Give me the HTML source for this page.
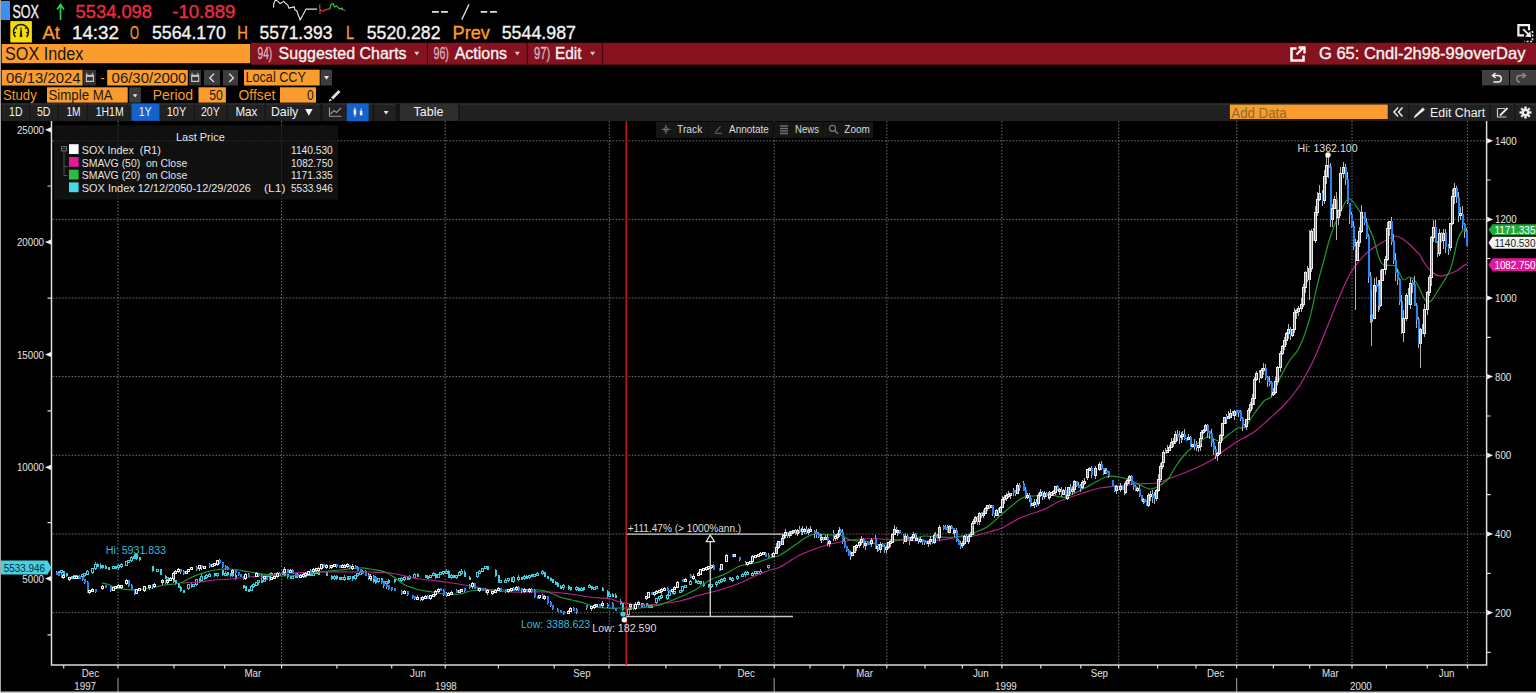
<!DOCTYPE html>
<html><head><meta charset="utf-8">
<style>
*{margin:0;padding:0}
html,body{width:1536px;height:693px;overflow:hidden;background:#000}
svg{position:absolute;left:0;top:0;display:block}
text{font-family:"Liberation Sans",sans-serif;white-space:pre}
</style></head><body>
<svg width="1536" height="693" viewBox="0 0 1536 693">
<!--HEADER-->
<g id="header">
<rect x="0" y="0" width="1" height="693" fill="#a8a8a8"/>
<rect x="1" y="1" width="9" height="19" fill="#3d8ef0"/>
<path d="M60.5 20V5.5M57 9.5L60.5 4.5L64 9.5" stroke="#33d04a" stroke-width="1.7" fill="none"/>
<polyline points="273.5,7.6 273.8,3.5 275.3,0.3 276.7,0.6 278.5,1.8 280,3.5 282,2.6 283.7,1.2 285,2.9 287.8,5 289,8.2 290.8,7.6 294.3,7 294.9,10 296.6,10.5 298.4,15.2 300.1,19.9 302.5,15.8 306,9.1 317.1,9.1" stroke="#e8e8e8" stroke-width="1.1" fill="none"/>
<path d="M319.8 4.4V8.8" stroke="#30c040" stroke-width="1"/>
<polyline points="320,14 320,9.4 321.2,10.5 323.6,11.1 324.8,10 327,9.4 329.4,9.1" stroke="#e83050" stroke-width="1.2" fill="none"/>
<polyline points="329.4,9.1 330,8.2 331.2,4.1 333,3.5 334.7,7 336.5,5.9 339.4,8.8 341.7,8.2 342.9,8.8" stroke="#33cc44" stroke-width="1.2" fill="none"/>
<polyline points="340.6,9.4 342,9.2 344,10 345.3,10.8" stroke="#e83050" stroke-width="1.2" fill="none"/>

<rect x="10.3" y="21.1" width="21.6" height="21.4" fill="#f7dc00"/>
<path d="M15.43 37A7.5 7.5 0 1 1 26.57 37" stroke="#1a1a1a" stroke-width="1.5" fill="none"/>
<path d="M20.6 27.3H21.4L22.3 36.6Q21 37.8 19.7 36.6Z" fill="#1a1a1a"/>
<path d="M13.8 32.6H15.9M26.1 32.6H28.2M15.4 27.2L16.9 28.8M26.6 27.2L25.1 28.8" stroke="#1a1a1a" stroke-width="1.3"/>

<path d="M432 11.85H438.8M441.1 11.85H447.9M480.7 11.85H487.2M490.1 11.85H496.9" stroke="#e0e0e0" stroke-width="1.8"/>
<path d="M469 4.2L461.8 19.6" stroke="#e0e0e0" stroke-width="1.3"/>
<!-- top-right icon -->
<path d="M1524 35.3H1518.4V25.2H1529V30.2" stroke="#f2f2f2" stroke-width="2.2" fill="none"/>
<path d="M1523.2 29.2L1528.2 34.2" stroke="#f2f2f2" stroke-width="1.9"/>
<path d="M1531 37.2L1525 36.6L1530.4 31.2Z" fill="#f2f2f2"/>
<path d="M1532.5 31V41.5H1524.5" stroke="#e8e8e8" stroke-width="1.6" stroke-dasharray="2 1.6" fill="none"/>

<!-- row3 -->
<rect x="1.7" y="44" width="248.6" height="19.2" fill="#fb9d2e"/>
<rect x="251" y="42.8" width="1285" height="21.9" fill="#87121f"/>
<rect x="426.8" y="42.8" width="1.2" height="21.9" fill="#400710"/>
<rect x="526.7" y="42.8" width="1.2" height="21.9" fill="#400710"/>
<rect x="601.9" y="42.8" width="1.2" height="21.9" fill="#400710"/>
<path d="M414.2 51.8H419.4L416.8 55.6Z M514.7 51.8H519.9L517.3 55.6Z M590 51.8H595.2L592.6 55.6Z" fill="#dcc8cc"/>
<path d="M1296.5 48.5H1291.5V60.5H1303.5V55.5" stroke="#f4f4f4" stroke-width="2.6" fill="none"/>
<path d="M1296.5 54.5L1303.5 47.5M1298.5 47.5H1304.5V53.5" stroke="#f4f4f4" stroke-width="2.4" fill="none"/>

<!-- row4 -->
<rect x="1.7" y="69.9" width="80.9" height="15.6" fill="#fb9d2e"/>
<rect x="83.3" y="69.9" width="12.6" height="15.6" fill="#333"/>
<rect x="107.2" y="69.9" width="80.6" height="15.6" fill="#fb9d2e"/>
<rect x="189.2" y="69.9" width="11.8" height="15.6" fill="#333"/>
<path d="M86.4 75.4H93.4V81.4H86.4Z" stroke="#c8c8c8" stroke-width="1.1" fill="none"/><path d="M86.4 76.2H93.4" stroke="#c8c8c8" stroke-width="1.4"/><path d="M86.8 72.8V75M92.6 72.8V75" stroke="#c0c0c0" stroke-width="1"/>
<path d="M191.7 75.4H198.7V81.4H191.7Z" stroke="#c8c8c8" stroke-width="1.1" fill="none"/><path d="M191.7 76.2H198.7" stroke="#c8c8c8" stroke-width="1.4"/><path d="M192.1 72.8V75M197.9 72.8V75" stroke="#c0c0c0" stroke-width="1"/>
<rect x="203.9" y="69.9" width="16.1" height="15.6" fill="#3c3c3c"/>
<rect x="222.9" y="69.9" width="15.1" height="15.6" fill="#3c3c3c"/>
<path d="M214 73.8L209.8 77.9L214 82" stroke="#e6e6e6" stroke-width="1.3" fill="none"/>
<path d="M229.2 73.8L233.4 77.9L229.2 82" stroke="#e6e6e6" stroke-width="1.3" fill="none"/>
<rect x="244" y="69.7" width="75.7" height="15.8" fill="#fb9d2e"/>
<rect x="320.6" y="69.7" width="11.4" height="15.8" fill="#3c3c3c"/>
<path d="M324 76H329L326.5 79.8Z" fill="#e6e6e6"/>
<rect x="1482" y="70" width="27" height="15.4" fill="#3f3f3f"/>
<rect x="1510" y="70" width="26" height="15.4" fill="#3f3f3f"/>
<path d="M1493 75.5H1498A3.2 3.2 0 0 1 1498 82H1493.5" stroke="#f0f0f0" stroke-width="1.5" fill="none"/>
<path d="M1495.5 73L1492.5 75.5L1495.5 78" stroke="#f0f0f0" stroke-width="1.5" fill="none"/>
<path d="M1525 75.5H1520A3.2 3.2 0 0 0 1520 82" stroke="#8a8a8a" stroke-width="1.5" fill="none"/>
<path d="M1522.5 73L1525.5 75.5L1522.5 78" stroke="#8a8a8a" stroke-width="1.5" fill="none"/>

<!-- row5 -->
<rect x="47" y="87.3" width="80.7" height="15.3" fill="#fb9d2e"/>
<rect x="129.2" y="87.3" width="11.7" height="15.3" fill="#3c3c3c"/>
<path d="M132.8 94.2H137.4L135.1 97.4Z" fill="#e6e6e6"/>
<rect x="198.5" y="87.3" width="27.4" height="15.3" fill="#fb9d2e"/>
<rect x="280" y="87.3" width="36" height="15.3" fill="#fb9d2e"/>
<path d="M331 97.5L338.5 90L340.5 92L333 99.5Z" fill="#dedede"/>
<path d="M330 98.5L332 100.5L328.5 101.5Z" fill="#dedede"/>

<!-- row6 -->
<rect x="1.5" y="103.6" width="1534.5" height="17.4" fill="#212121"/>
<rect x="1.5" y="103.3" width="1534.5" height="1.3" fill="#353535"/>
<g fill="#151515">
<rect x="29.2" y="103.6" width="1" height="17.2"/>
<rect x="57.6" y="103.6" width="1" height="17.2"/>
<rect x="86.8" y="103.6" width="1" height="17.2"/>
<rect x="193.9" y="103.6" width="1" height="17.2"/>
<rect x="226.6" y="103.6" width="1" height="17.2"/>
<rect x="264.6" y="103.6" width="1" height="17.2"/>
<rect x="320.2" y="103.6" width="2.5" height="17.2"/>
<rect x="372.8" y="103.6" width="1.5" height="17.2"/>
<rect x="395.5" y="103.6" width="4.5" height="17.2"/>
<rect x="458.2" y="103.6" width="1.5" height="17.2"/>
<rect x="1408" y="103.6" width="1.2" height="17.2"/>
<rect x="1489.2" y="103.6" width="1.2" height="17.2"/>
<rect x="1514" y="103.6" width="1.2" height="17.2"/>
</g>
<rect x="400" y="103.6" width="58.2" height="17.2" fill="#2e2e2e"/>
<rect x="131.5" y="103.6" width="28" height="17.2" fill="#1462cc"/>
<rect x="346.8" y="103.4" width="21.9" height="17.8" fill="#1462cc"/>
<path d="M354.9 107.5V117M361.1 108.5V116" stroke="#cfe0ff" stroke-width="1"/>
<rect x="353.6" y="109.5" width="2.6" height="5" fill="#f4f4f4"/>
<rect x="359.8" y="111" width="2.6" height="4" fill="#f4f4f4"/>
<path d="M329.5 107.5V116.2H341.5" stroke="#9a9a9a" stroke-width="1.1" fill="none"/>
<path d="M330.5 114L334 110.5L336.5 112.5L341 108" stroke="#9a9a9a" stroke-width="1.1" fill="none"/>
<path d="M305.1 108.9H312.6L308.85 115.7Z" fill="#f4f4f4"/>
<path d="M383.6 111H388.6L386.1 114.4Z" fill="#e6e6e6"/>
<rect x="1229.9" y="104.6" width="157.8" height="14.4" fill="#fb9d2e"/>
<path d="M1398 107.5L1394 112L1398 116.5M1402.5 107.5L1398.5 112L1402.5 116.5" stroke="#eaeaea" stroke-width="1.5" fill="none"/>
<path d="M1416 117L1414 118.5L1414.6 115.8L1422.8 107.5L1425 109.7Z" fill="#eaeaea"/>
<path d="M1497.5 108.5H1505M1497.5 108.5V117H1506.5" stroke="#cfcfcf" stroke-width="1.2" fill="none"/>
<path d="M1500 115.5L1507.5 108" stroke="#f0f0f0" stroke-width="1.8"/>
<g transform="translate(1525.5,112.5)" fill="#f0f0f0">
<circle r="3.6"/>
<rect x="-1.2" y="-6" width="2.4" height="12"/>
<rect x="-6" y="-1.2" width="12" height="2.4"/>
<rect x="-1.2" y="-6" width="2.4" height="12" transform="rotate(45)"/>
<rect x="-1.2" y="-6" width="2.4" height="12" transform="rotate(-45)"/>
<circle r="1.5" fill="#212121"/>
</g>
</g>
<path d="M52.5 140.8H1486.6 M52.5 219.4H1486.6 M52.5 298H1486.6 M52.5 376.6H1486.6 M52.5 455.3H1486.6 M52.5 534H1486.6 M52.5 612.7H1486.6 M118 121V665 M281.5 121V665 M445.2 121V665 M609.3 121V665 M774.2 121V665 M886.8 121V665 M1001.9 121V665 M1118.7 121V665 M1236.8 121V665 M1352 121V665 M1467.4 121V665" stroke="#6e6e6e" stroke-width="1" stroke-dasharray="1.6 1.6" fill="none"/>
<rect x="54" y="125.2" width="284" height="74.4" fill="#161616" fill-opacity="0.72"/>
<rect x="656" y="121.7" width="217" height="16.1" fill="#161616"/>
<path d="M708 122V137.6M773.5 122V137.6M823 122V137.6" stroke="#0c0c0c" stroke-width="1"/>
<path d="M51.5 121V665H1486.6V121" stroke="#dcdcdc" stroke-width="1.5" fill="none"/>
<path d="M51.0 127.20000000000002L45.0 129.8L51.0 132.4Z M51.0 239.4L45.0 242L51.0 244.6Z M51.0 351.9L45.0 354.5L51.0 357.1Z M51.0 464.7L45.0 467.3L51.0 469.90000000000003Z M51.0 576.0L45.0 578.6L51.0 581.2Z" fill="#f0f0f0"/>
<path d="M47.5 186H51.5 M47.5 298.2H51.5 M47.5 410.8H51.5 M47.5 522.6H51.5 M47.5 634.8H51.5 M1486.6 180H1490.6 M1486.6 258.5H1490.6 M1486.6 337.3H1490.6 M1486.6 416H1490.6 M1486.6 494.6H1490.6 M1486.6 573.4H1490.6 M1486.6 652.4H1490.6" stroke="#dcdcdc" stroke-width="1.2"/>
<path d="M1487.1 138.20000000000002L1493.1 140.8L1487.1 143.4Z M1487.1 216.8L1493.1 219.4L1487.1 222.0Z M1487.1 295.4L1493.1 298L1487.1 300.6Z M1487.1 374.0L1493.1 376.6L1487.1 379.20000000000005Z M1487.1 452.7L1493.1 455.3L1487.1 457.90000000000003Z M1487.1 531.4L1493.1 534L1487.1 536.6Z M1487.1 610.1L1493.1 612.7L1487.1 615.3000000000001Z" fill="#f0f0f0"/>
<path d="M63.7 665V668.5 M118 665V668.5 M174 665V668.5 M224.7 665V668.5 M281.6 665V668.5 M336.9 665V668.5 M391.7 665V668.5 M445.2 665V668.5 M498.4 665V668.5 M554.2 665V668.5 M609 665V668.5 M665.9 665V668.5 M720 665V668.5 M774.2 665V668.5 M810 665V668.5 M843.8 665V668.5 M886.8 665V668.5 M925 665V668.5 M962.3 665V668.5 M1001.9 665V668.5 M1040.8 665V668.5 M1080.8 665V668.5 M1118.7 665V668.5 M1157.6 665V668.5 M1195.9 665V668.5 M1236.6 665V668.5 M1273.4 665V668.5 M1309.7 665V668.5 M1352 665V668.5 M1386.4 665V668.5 M1427.2 665V668.5 M1467.5 665V668.5" stroke="#dcdcdc" stroke-width="1.2"/>
<path d="M118 678V692M774.2 678V692M1236.6 678V692" stroke="#8a8a8a" stroke-width="1.2"/>
<rect x="0" y="691.5" width="1536" height="1.5" fill="#c8c8c8"/>
<g shape-rendering="crispEdges" stroke-width="1">
<path d="M58.5 570.8V574.0" stroke="#38bccc"/>
<rect x="58" y="570.5" width="2" height="3.0" fill="#3ecfe0"/>
<path d="M61.5 570.8V573.1" stroke="#38bccc"/>
<rect x="60.5" y="570.9" width="2" height="2.0" fill="#000" stroke="#44cedd"/>
<path d="M63.5 571.3V574.5" stroke="#38bccc"/>
<rect x="63" y="571.1" width="2" height="3.5" fill="#3ecfe0"/>
<path d="M66.5 572.7V576.7" stroke="#38bccc"/>
<rect x="66" y="573.4" width="2" height="3.0" fill="#3ecfe0"/>
<path d="M71.5 576.2V578.7" stroke="#38bccc"/>
<rect x="71" y="576.0" width="2" height="3.0" fill="#3ecfe0"/>
<path d="M74.5 575.4V579.0" stroke="#38bccc"/>
<rect x="73.5" y="575.8" width="2" height="2.0" fill="#000" stroke="#44cedd"/>
<path d="M76.5 574.8V578.1" stroke="#38bccc"/>
<rect x="76" y="575.4" width="2" height="3.0" fill="#3ecfe0"/>
<path d="M79.5 574.6V578.9" stroke="#38bccc"/>
<rect x="78.5" y="576.0" width="2" height="2.0" fill="#000" stroke="#44cedd"/>
<path d="M82.5 573.9V577.4" stroke="#38bccc"/>
<rect x="81.5" y="574.8" width="2" height="2.0" fill="#000" stroke="#44cedd"/>
<path d="M84.5 573.2V576.9" stroke="#38bccc"/>
<rect x="83.5" y="573.7" width="2" height="2.0" fill="#000" stroke="#44cedd"/>
<path d="M87.5 570.3V574.6" stroke="#38bccc"/>
<rect x="86.5" y="571.7" width="2" height="2.3" fill="#000" stroke="#44cedd"/>
<path d="M92.5 568.1V573.8" stroke="#38bccc"/>
<rect x="91.5" y="568.4" width="2" height="4.5" fill="#000" stroke="#44cedd"/>
<path d="M95.5 562.4V569.5" stroke="#38bccc"/>
<rect x="94.5" y="564.0" width="2" height="4.4" fill="#000" stroke="#44cedd"/>
<path d="M97.5 562.6V567.2" stroke="#38bccc"/>
<rect x="97" y="563.5" width="2" height="3.0" fill="#3ecfe0"/>
<path d="M100.5 563.4V569.0" stroke="#38bccc"/>
<rect x="100" y="564.6" width="2" height="3.0" fill="#3ecfe0"/>
<path d="M102.5 565.4V568.9" stroke="#38bccc"/>
<rect x="102" y="565.0" width="2" height="3.0" fill="#3ecfe0"/>
<path d="M105.5 565.0V569.2" stroke="#38bccc"/>
<rect x="105" y="566.1" width="2" height="3.0" fill="#3ecfe0"/>
<path d="M108.5 567.4V570.3" stroke="#38bccc"/>
<rect x="108" y="566.9" width="2" height="3.0" fill="#3ecfe0"/>
<path d="M113.5 565.8V568.6" stroke="#38bccc"/>
<rect x="112.5" y="566.1" width="2" height="2.0" fill="#000" stroke="#44cedd"/>
<path d="M115.5 565.9V569.0" stroke="#38bccc"/>
<rect x="115" y="565.6" width="2" height="3.0" fill="#3ecfe0"/>
<path d="M118.5 564.3V569.6" stroke="#38bccc"/>
<rect x="117.5" y="565.9" width="2" height="2.0" fill="#000" stroke="#44cedd"/>
<path d="M121.5 563.3V568.2" stroke="#38bccc"/>
<rect x="120.5" y="564.0" width="2" height="2.5" fill="#000" stroke="#44cedd"/>
<path d="M126.5 560.8V566.1" stroke="#38bccc"/>
<rect x="125.5" y="561.3" width="2" height="3.9" fill="#000" stroke="#44cedd"/>
<path d="M128.5 560.1V563.0" stroke="#38bccc"/>
<rect x="127.5" y="560.1" width="2" height="2.0" fill="#000" stroke="#44cedd"/>
<path d="M131.5 555.6V562.3" stroke="#38bccc"/>
<rect x="130.5" y="557.5" width="2" height="3.4" fill="#000" stroke="#44cedd"/>
<path d="M134.5 554.7V558.1" stroke="#38bccc"/>
<rect x="133.5" y="556.0" width="2" height="2.0" fill="#000" stroke="#44cedd"/>
<path d="M136.5 554.7V560.0" stroke="#38bccc"/>
<rect x="136" y="555.9" width="2" height="3.0" fill="#3ecfe0"/>
<path d="M139.5 557.1V560.6" stroke="#38bccc"/>
<rect x="139" y="556.8" width="2" height="3.0" fill="#3ecfe0"/>
<path d="M152.5 566.8V572.1" stroke="#38bccc"/>
<rect x="152" y="566.3" width="2" height="4.5" fill="#3ecfe0"/>
<path d="M157.5 568.7V571.9" stroke="#38bccc"/>
<rect x="156.5" y="569.4" width="2" height="2.2" fill="#000" stroke="#44cedd"/>
<path d="M160.5 568.5V575.4" stroke="#38bccc"/>
<rect x="160" y="568.9" width="2" height="6.0" fill="#3ecfe0"/>
<path d="M165.5 575.0V579.2" stroke="#38bccc"/>
<rect x="165" y="576.1" width="2" height="3.2" fill="#3ecfe0"/>
<path d="M167.5 576.5V579.9" stroke="#38bccc"/>
<rect x="166.5" y="577.6" width="2" height="2.0" fill="#000" stroke="#44cedd"/>
<path d="M173.5 577.8V582.9" stroke="#38bccc"/>
<rect x="173" y="579.0" width="2" height="3.0" fill="#3ecfe0"/>
<path d="M175.5 580.6V585.0" stroke="#38bccc"/>
<rect x="175" y="580.4" width="2" height="3.5" fill="#3ecfe0"/>
<path d="M178.5 582.7V588.3" stroke="#38bccc"/>
<rect x="178" y="582.9" width="2" height="5.4" fill="#3ecfe0"/>
<path d="M180.5 586.1V592.2" stroke="#38bccc"/>
<rect x="180" y="587.4" width="2" height="3.7" fill="#3ecfe0"/>
<path d="M183.5 589.9V593.4" stroke="#38bccc"/>
<rect x="183" y="589.9" width="2" height="3.0" fill="#3ecfe0"/>
<path d="M188.5 584.3V589.6" stroke="#38bccc"/>
<rect x="187.5" y="584.8" width="2" height="3.4" fill="#000" stroke="#44cedd"/>
<path d="M191.5 582.6V588.4" stroke="#38bccc"/>
<rect x="191" y="584.0" width="2" height="3.0" fill="#3ecfe0"/>
<path d="M193.5 583.7V586.6" stroke="#38bccc"/>
<rect x="192.5" y="584.2" width="2" height="2.0" fill="#000" stroke="#44cedd"/>
<path d="M196.5 578.5V586.1" stroke="#38bccc"/>
<rect x="195.5" y="579.7" width="2" height="4.5" fill="#000" stroke="#44cedd"/>
<path d="M199.5 577.7V582.6" stroke="#38bccc"/>
<rect x="199" y="578.5" width="2" height="3.0" fill="#3ecfe0"/>
<path d="M201.5 574.3V581.8" stroke="#38bccc"/>
<rect x="200.5" y="576.1" width="2" height="4.1" fill="#000" stroke="#44cedd"/>
<path d="M204.5 575.6V579.5" stroke="#38bccc"/>
<rect x="204" y="575.5" width="2" height="3.0" fill="#3ecfe0"/>
<path d="M206.5 573.5V578.6" stroke="#38bccc"/>
<rect x="205.5" y="575.5" width="2" height="2.3" fill="#000" stroke="#44cedd"/>
<path d="M209.5 572.8V576.6" stroke="#38bccc"/>
<rect x="208.5" y="574.2" width="2" height="2.0" fill="#000" stroke="#44cedd"/>
<path d="M214.5 572.9V576.9" stroke="#38bccc"/>
<rect x="214" y="572.7" width="2" height="3.0" fill="#3ecfe0"/>
<path d="M217.5 573.2V577.0" stroke="#38bccc"/>
<rect x="216.5" y="573.9" width="2" height="2.0" fill="#000" stroke="#44cedd"/>
<path d="M222.5 569.8V576.3" stroke="#38bccc"/>
<rect x="222" y="570.4" width="2" height="4.6" fill="#3ecfe0"/>
<path d="M225.5 571.3V575.4" stroke="#38bccc"/>
<rect x="224.5" y="573.0" width="2" height="2.0" fill="#000" stroke="#44cedd"/>
<path d="M227.5 572.2V575.8" stroke="#38bccc"/>
<rect x="227" y="572.1" width="2" height="3.0" fill="#3ecfe0"/>
<path d="M230.5 572.7V576.8" stroke="#38bccc"/>
<rect x="230" y="572.5" width="2" height="3.0" fill="#3ecfe0"/>
<path d="M232.5 572.4V577.4" stroke="#38bccc"/>
<rect x="232" y="573.1" width="2" height="3.0" fill="#3ecfe0"/>
<path d="M235.5 574.0V579.5" stroke="#38bccc"/>
<rect x="235" y="574.5" width="2" height="4.5" fill="#3ecfe0"/>
<path d="M243.5 585.3V588.6" stroke="#38bccc"/>
<rect x="243" y="585.1" width="2" height="3.0" fill="#3ecfe0"/>
<path d="M245.5 586.1V591.1" stroke="#38bccc"/>
<rect x="245" y="586.2" width="2" height="4.3" fill="#3ecfe0"/>
<path d="M248.5 588.9V592.3" stroke="#38bccc"/>
<rect x="248" y="588.6" width="2" height="3.0" fill="#3ecfe0"/>
<path d="M251.5 585.0V591.2" stroke="#38bccc"/>
<rect x="250.5" y="586.5" width="2" height="3.7" fill="#000" stroke="#44cedd"/>
<path d="M253.5 582.9V587.6" stroke="#38bccc"/>
<rect x="252.5" y="584.8" width="2" height="2.0" fill="#000" stroke="#44cedd"/>
<path d="M256.5 581.6V586.4" stroke="#38bccc"/>
<rect x="255.5" y="582.6" width="2" height="2.4" fill="#000" stroke="#44cedd"/>
<path d="M258.5 579.9V584.7" stroke="#38bccc"/>
<rect x="257.5" y="580.8" width="2" height="2.0" fill="#000" stroke="#44cedd"/>
<path d="M261.5 578.2V582.6" stroke="#38bccc"/>
<rect x="261" y="579.5" width="2" height="3.0" fill="#3ecfe0"/>
<path d="M264.5 577.5V581.4" stroke="#38bccc"/>
<rect x="263.5" y="579.1" width="2" height="2.0" fill="#000" stroke="#44cedd"/>
<path d="M266.5 575.9V579.7" stroke="#38bccc"/>
<rect x="265.5" y="576.0" width="2" height="3.2" fill="#000" stroke="#44cedd"/>
<path d="M269.5 572.5V577.9" stroke="#38bccc"/>
<rect x="268.5" y="574.1" width="2" height="2.0" fill="#000" stroke="#44cedd"/>
<path d="M271.5 571.7V575.3" stroke="#38bccc"/>
<rect x="270.5" y="573.0" width="2" height="2.0" fill="#000" stroke="#44cedd"/>
<path d="M274.5 573.3V578.3" stroke="#38bccc"/>
<rect x="274" y="573.3" width="2" height="3.6" fill="#3ecfe0"/>
<path d="M277.5 572.5V578.2" stroke="#38bccc"/>
<rect x="276.5" y="574.5" width="2" height="2.0" fill="#000" stroke="#44cedd"/>
<path d="M279.5 572.2V575.9" stroke="#38bccc"/>
<rect x="278.5" y="573.2" width="2" height="2.0" fill="#000" stroke="#44cedd"/>
<path d="M282.5 571.4V574.9" stroke="#38bccc"/>
<rect x="282" y="572.3" width="2" height="3.0" fill="#3ecfe0"/>
<path d="M284.5 573.5V576.2" stroke="#38bccc"/>
<rect x="284" y="573.0" width="2" height="3.0" fill="#3ecfe0"/>
<path d="M287.5 574.6V578.7" stroke="#38bccc"/>
<rect x="287" y="574.2" width="2" height="3.0" fill="#3ecfe0"/>
<path d="M290.5 575.9V578.7" stroke="#38bccc"/>
<rect x="290" y="575.7" width="2" height="3.0" fill="#3ecfe0"/>
<path d="M292.5 575.6V578.4" stroke="#38bccc"/>
<rect x="291.5" y="576.1" width="2" height="2.0" fill="#000" stroke="#44cedd"/>
<path d="M295.5 573.6V577.8" stroke="#38bccc"/>
<rect x="295" y="574.8" width="2" height="3.0" fill="#3ecfe0"/>
<path d="M297.5 572.9V577.7" stroke="#38bccc"/>
<rect x="296.5" y="574.0" width="2" height="2.3" fill="#000" stroke="#44cedd"/>
<path d="M303.5 572.4V576.9" stroke="#38bccc"/>
<rect x="303" y="572.0" width="2" height="3.5" fill="#3ecfe0"/>
<path d="M305.5 573.9V577.8" stroke="#38bccc"/>
<rect x="305" y="573.6" width="2" height="3.0" fill="#3ecfe0"/>
<path d="M308.5 572.4V576.0" stroke="#38bccc"/>
<rect x="307.5" y="573.3" width="2" height="2.0" fill="#000" stroke="#44cedd"/>
<path d="M310.5 572.4V575.2" stroke="#38bccc"/>
<rect x="310" y="572.5" width="2" height="3.0" fill="#3ecfe0"/>
<path d="M313.5 572.9V575.4" stroke="#38bccc"/>
<rect x="312.5" y="573.1" width="2" height="2.0" fill="#000" stroke="#44cedd"/>
<path d="M316.5 570.8V574.3" stroke="#38bccc"/>
<rect x="315.5" y="571.4" width="2" height="2.3" fill="#000" stroke="#44cedd"/>
<path d="M318.5 570.4V574.3" stroke="#38bccc"/>
<rect x="318" y="570.9" width="2" height="3.6" fill="#3ecfe0"/>
<path d="M326.5 572.2V576.1" stroke="#38bccc"/>
<rect x="326" y="572.1" width="2" height="3.6" fill="#3ecfe0"/>
<path d="M331.5 575.2V579.8" stroke="#38bccc"/>
<rect x="331" y="575.7" width="2" height="3.0" fill="#3ecfe0"/>
<path d="M334.5 574.9V580.3" stroke="#38bccc"/>
<rect x="333.5" y="576.3" width="2" height="2.0" fill="#000" stroke="#44cedd"/>
<path d="M336.5 575.1V579.7" stroke="#38bccc"/>
<rect x="336" y="576.0" width="2" height="3.0" fill="#3ecfe0"/>
<path d="M339.5 577.2V579.6" stroke="#38bccc"/>
<rect x="339" y="576.8" width="2" height="3.0" fill="#3ecfe0"/>
<path d="M342.5 577.1V579.9" stroke="#38bccc"/>
<rect x="341.5" y="577.6" width="2" height="2.0" fill="#000" stroke="#44cedd"/>
<path d="M344.5 575.4V580.5" stroke="#38bccc"/>
<rect x="343.5" y="577.1" width="2" height="2.0" fill="#000" stroke="#44cedd"/>
<path d="M347.5 576.4V579.9" stroke="#38bccc"/>
<rect x="347" y="576.5" width="2" height="3.0" fill="#3ecfe0"/>
<path d="M349.5 575.9V580.4" stroke="#38bccc"/>
<rect x="348.5" y="576.5" width="2" height="2.0" fill="#000" stroke="#44cedd"/>
<path d="M352.5 576.3V580.7" stroke="#38bccc"/>
<rect x="352" y="576.3" width="2" height="3.0" fill="#3ecfe0"/>
<path d="M355.5 575.0V579.5" stroke="#38bccc"/>
<rect x="354.5" y="575.0" width="2" height="3.7" fill="#000" stroke="#44cedd"/>
<path d="M357.5 573.4V576.8" stroke="#38bccc"/>
<rect x="356.5" y="573.8" width="2" height="2.0" fill="#000" stroke="#44cedd"/>
<path d="M360.5 572.0V575.4" stroke="#38bccc"/>
<rect x="359.5" y="572.1" width="2" height="2.4" fill="#000" stroke="#44cedd"/>
<path d="M365.5 570.4V575.4" stroke="#38bccc"/>
<rect x="365" y="571.0" width="2" height="3.8" fill="#3ecfe0"/>
<path d="M368.5 572.9V580.3" stroke="#38bccc"/>
<rect x="368" y="573.8" width="2" height="5.2" fill="#3ecfe0"/>
<path d="M370.5 576.1V580.4" stroke="#38bccc"/>
<rect x="370" y="577.6" width="2" height="3.0" fill="#3ecfe0"/>
<path d="M373.5 579.1V582.9" stroke="#38bccc"/>
<rect x="373" y="578.7" width="2" height="3.0" fill="#3ecfe0"/>
<path d="M375.5 578.6V583.7" stroke="#38bccc"/>
<rect x="375" y="579.6" width="2" height="3.0" fill="#3ecfe0"/>
<path d="M378.5 577.7V583.1" stroke="#38bccc"/>
<rect x="377.5" y="578.7" width="2" height="2.7" fill="#000" stroke="#44cedd"/>
<path d="M381.5 577.5V584.0" stroke="#38bccc"/>
<rect x="381" y="578.2" width="2" height="4.5" fill="#3ecfe0"/>
<path d="M383.5 581.1V583.6" stroke="#38bccc"/>
<rect x="383" y="581.0" width="2" height="3.0" fill="#3ecfe0"/>
<path d="M386.5 580.9V584.8" stroke="#38bccc"/>
<rect x="385.5" y="581.1" width="2" height="2.0" fill="#000" stroke="#44cedd"/>
<path d="M388.5 579.3V583.9" stroke="#38bccc"/>
<rect x="388" y="580.0" width="2" height="3.0" fill="#3ecfe0"/>
<path d="M394.5 578.5V582.6" stroke="#38bccc"/>
<rect x="394" y="579.0" width="2" height="3.0" fill="#3ecfe0"/>
<path d="M399.5 578.2V580.9" stroke="#38bccc"/>
<rect x="398.5" y="578.3" width="2" height="2.0" fill="#000" stroke="#44cedd"/>
<path d="M401.5 576.5V581.9" stroke="#38bccc"/>
<rect x="400.5" y="578.0" width="2" height="2.0" fill="#000" stroke="#44cedd"/>
<path d="M404.5 576.4V580.8" stroke="#38bccc"/>
<rect x="403.5" y="577.4" width="2" height="2.0" fill="#000" stroke="#44cedd"/>
<path d="M407.5 576.2V579.6" stroke="#38bccc"/>
<rect x="407" y="577.0" width="2" height="3.0" fill="#3ecfe0"/>
<path d="M409.5 575.2V579.6" stroke="#38bccc"/>
<rect x="408.5" y="576.7" width="2" height="2.2" fill="#000" stroke="#44cedd"/>
<path d="M414.5 573.3V578.9" stroke="#38bccc"/>
<rect x="413.5" y="574.7" width="2" height="2.9" fill="#000" stroke="#44cedd"/>
<path d="M417.5 573.2V577.2" stroke="#38bccc"/>
<rect x="417" y="573.7" width="2" height="3.0" fill="#3ecfe0"/>
<path d="M425.5 575.4V578.4" stroke="#38bccc"/>
<rect x="425" y="574.9" width="2" height="3.0" fill="#3ecfe0"/>
<path d="M427.5 575.1V578.5" stroke="#38bccc"/>
<rect x="427" y="575.5" width="2" height="3.0" fill="#3ecfe0"/>
<path d="M430.5 574.5V578.2" stroke="#38bccc"/>
<rect x="429.5" y="575.0" width="2" height="2.0" fill="#000" stroke="#44cedd"/>
<path d="M433.5 571.9V576.1" stroke="#38bccc"/>
<rect x="432.5" y="573.8" width="2" height="2.0" fill="#000" stroke="#44cedd"/>
<path d="M435.5 572.9V578.6" stroke="#38bccc"/>
<rect x="435" y="574.2" width="2" height="3.4" fill="#3ecfe0"/>
<path d="M438.5 573.8V577.2" stroke="#38bccc"/>
<rect x="437.5" y="574.7" width="2" height="2.4" fill="#000" stroke="#44cedd"/>
<path d="M440.5 571.9V575.4" stroke="#38bccc"/>
<rect x="439.5" y="572.8" width="2" height="2.0" fill="#000" stroke="#44cedd"/>
<path d="M443.5 571.1V575.4" stroke="#38bccc"/>
<rect x="442.5" y="571.7" width="2" height="2.0" fill="#000" stroke="#44cedd"/>
<path d="M446.5 569.4V573.3" stroke="#38bccc"/>
<rect x="445.5" y="571.1" width="2" height="2.0" fill="#000" stroke="#44cedd"/>
<path d="M448.5 569.9V577.7" stroke="#38bccc"/>
<rect x="448" y="571.2" width="2" height="6.4" fill="#3ecfe0"/>
<path d="M451.5 573.9V579.1" stroke="#38bccc"/>
<rect x="450.5" y="575.9" width="2" height="2.0" fill="#000" stroke="#44cedd"/>
<path d="M453.5 575.4V578.0" stroke="#38bccc"/>
<rect x="453" y="575.4" width="2" height="3.0" fill="#3ecfe0"/>
<path d="M456.5 574.6V579.0" stroke="#38bccc"/>
<rect x="455.5" y="575.2" width="2" height="2.0" fill="#000" stroke="#44cedd"/>
<path d="M459.5 571.0V575.5" stroke="#38bccc"/>
<rect x="458.5" y="572.1" width="2" height="3.1" fill="#000" stroke="#44cedd"/>
<path d="M461.5 569.3V574.7" stroke="#38bccc"/>
<rect x="460.5" y="571.1" width="2" height="2.0" fill="#000" stroke="#44cedd"/>
<path d="M464.5 570.2V577.3" stroke="#38bccc"/>
<rect x="464" y="571.5" width="2" height="5.2" fill="#3ecfe0"/>
<path d="M469.5 575.5V580.3" stroke="#38bccc"/>
<rect x="469" y="576.5" width="2" height="3.0" fill="#3ecfe0"/>
<path d="M477.5 571.6V577.5" stroke="#38bccc"/>
<rect x="476.5" y="572.2" width="2" height="3.8" fill="#000" stroke="#44cedd"/>
<path d="M479.5 569.7V573.7" stroke="#38bccc"/>
<rect x="478.5" y="571.1" width="2" height="2.0" fill="#000" stroke="#44cedd"/>
<path d="M482.5 567.9V572.2" stroke="#38bccc"/>
<rect x="481.5" y="568.2" width="2" height="3.7" fill="#000" stroke="#44cedd"/>
<path d="M485.5 565.6V569.0" stroke="#38bccc"/>
<rect x="484.5" y="566.6" width="2" height="2.0" fill="#000" stroke="#44cedd"/>
<path d="M487.5 566.0V569.8" stroke="#38bccc"/>
<rect x="487" y="566.4" width="2" height="3.6" fill="#3ecfe0"/>
<path d="M495.5 569.2V577.4" stroke="#38bccc"/>
<rect x="495" y="569.8" width="2" height="6.3" fill="#3ecfe0"/>
<path d="M498.5 574.8V582.9" stroke="#38bccc"/>
<rect x="498" y="575.2" width="2" height="7.2" fill="#3ecfe0"/>
<path d="M500.5 579.9V582.5" stroke="#38bccc"/>
<rect x="499.5" y="580.0" width="2" height="2.0" fill="#000" stroke="#44cedd"/>
<path d="M505.5 578.3V582.4" stroke="#38bccc"/>
<rect x="504.5" y="580.0" width="2" height="2.0" fill="#000" stroke="#44cedd"/>
<path d="M508.5 577.8V581.5" stroke="#38bccc"/>
<rect x="507.5" y="578.6" width="2" height="2.0" fill="#000" stroke="#44cedd"/>
<path d="M511.5 577.4V581.7" stroke="#38bccc"/>
<rect x="511" y="578.7" width="2" height="3.5" fill="#3ecfe0"/>
<path d="M513.5 576.1V582.6" stroke="#38bccc"/>
<rect x="512.5" y="577.9" width="2" height="3.8" fill="#000" stroke="#44cedd"/>
<path d="M518.5 575.4V580.8" stroke="#38bccc"/>
<rect x="517.5" y="577.0" width="2" height="2.0" fill="#000" stroke="#44cedd"/>
<path d="M521.5 576.7V579.3" stroke="#38bccc"/>
<rect x="521" y="576.5" width="2" height="3.0" fill="#3ecfe0"/>
<path d="M524.5 575.0V580.3" stroke="#38bccc"/>
<rect x="523.5" y="576.9" width="2" height="2.0" fill="#000" stroke="#44cedd"/>
<path d="M526.5 575.4V579.4" stroke="#38bccc"/>
<rect x="526" y="575.8" width="2" height="3.0" fill="#3ecfe0"/>
<path d="M529.5 574.5V579.4" stroke="#38bccc"/>
<rect x="528.5" y="575.0" width="2" height="2.5" fill="#000" stroke="#44cedd"/>
<path d="M531.5 574.3V577.0" stroke="#38bccc"/>
<rect x="531" y="574.0" width="2" height="3.0" fill="#3ecfe0"/>
<path d="M534.5 574.3V576.6" stroke="#38bccc"/>
<rect x="533.5" y="574.5" width="2" height="2.0" fill="#000" stroke="#44cedd"/>
<path d="M537.5 572.4V575.6" stroke="#38bccc"/>
<rect x="536.5" y="573.2" width="2" height="2.0" fill="#000" stroke="#44cedd"/>
<path d="M542.5 569.7V574.9" stroke="#38bccc"/>
<rect x="541.5" y="571.6" width="2" height="2.0" fill="#000" stroke="#44cedd"/>
<path d="M544.5 572.1V577.0" stroke="#38bccc"/>
<rect x="544" y="572.1" width="2" height="5.0" fill="#3ecfe0"/>
<path d="M547.5 575.9V578.7" stroke="#38bccc"/>
<rect x="547" y="576.0" width="2" height="3.1" fill="#3ecfe0"/>
<path d="M550.5 577.3V580.6" stroke="#38bccc"/>
<rect x="550" y="577.6" width="2" height="3.0" fill="#3ecfe0"/>
<path d="M552.5 579.1V582.8" stroke="#38bccc"/>
<rect x="552" y="579.1" width="2" height="4.1" fill="#3ecfe0"/>
<path d="M555.5 580.6V584.4" stroke="#38bccc"/>
<rect x="555" y="581.5" width="2" height="3.0" fill="#3ecfe0"/>
<path d="M557.5 582.3V587.1" stroke="#38bccc"/>
<rect x="557" y="582.8" width="2" height="4.4" fill="#3ecfe0"/>
<path d="M560.5 584.5V588.6" stroke="#38bccc"/>
<rect x="560" y="585.7" width="2" height="3.0" fill="#3ecfe0"/>
<path d="M563.5 584.4V589.6" stroke="#38bccc"/>
<rect x="562.5" y="585.0" width="2" height="2.7" fill="#000" stroke="#44cedd"/>
<path d="M568.5 584.8V590.1" stroke="#38bccc"/>
<rect x="568" y="585.7" width="2" height="3.0" fill="#3ecfe0"/>
<path d="M570.5 586.7V591.1" stroke="#38bccc"/>
<rect x="570" y="586.6" width="2" height="3.0" fill="#3ecfe0"/>
<path d="M576.5 585.8V591.3" stroke="#38bccc"/>
<rect x="575.5" y="587.6" width="2" height="2.0" fill="#000" stroke="#44cedd"/>
<path d="M578.5 586.6V591.3" stroke="#38bccc"/>
<rect x="578" y="587.9" width="2" height="3.2" fill="#3ecfe0"/>
<path d="M581.5 586.7V590.7" stroke="#38bccc"/>
<rect x="580.5" y="588.2" width="2" height="2.4" fill="#000" stroke="#44cedd"/>
<path d="M583.5 587.1V590.5" stroke="#38bccc"/>
<rect x="583" y="587.4" width="2" height="3.0" fill="#3ecfe0"/>
<path d="M589.5 583.9V588.0" stroke="#38bccc"/>
<rect x="588.5" y="585.8" width="2" height="2.0" fill="#000" stroke="#44cedd"/>
<path d="M591.5 585.9V590.3" stroke="#38bccc"/>
<rect x="591" y="586.1" width="2" height="3.1" fill="#3ecfe0"/>
<path d="M594.5 587.3V590.4" stroke="#38bccc"/>
<rect x="593.5" y="587.4" width="2" height="2.0" fill="#000" stroke="#44cedd"/>
<path d="M596.5 586.1V589.2" stroke="#38bccc"/>
<rect x="595.5" y="586.5" width="2" height="2.0" fill="#000" stroke="#44cedd"/>
<path d="M602.5 586.9V590.5" stroke="#38bccc"/>
<rect x="602" y="587.9" width="2" height="3.0" fill="#3ecfe0"/>
<path d="M607.5 589.9V597.7" stroke="#38bccc"/>
<rect x="607" y="590.9" width="2" height="5.5" fill="#3ecfe0"/>
<path d="M609.5 592.2V597.3" stroke="#38bccc"/>
<rect x="608.5" y="594.1" width="2" height="2.0" fill="#000" stroke="#44cedd"/>
<path d="M612.5 593.3V596.5" stroke="#38bccc"/>
<rect x="612" y="593.5" width="2" height="3.0" fill="#3ecfe0"/>
<path d="M615.5 593.2V598.3" stroke="#38bccc"/>
<rect x="615" y="594.6" width="2" height="3.0" fill="#3ecfe0"/>
<path d="M620.5 599.3V605.4" stroke="#38bccc"/>
<rect x="620" y="600.7" width="2" height="3.3" fill="#3ecfe0"/>
<path d="M622.5 602.7V611.0" stroke="#38bccc"/>
<rect x="622" y="603.0" width="2" height="7.4" fill="#3ecfe0"/>
<path d="M628.5 608.0V615.6" stroke="#38bccc"/>
<rect x="627.5" y="609.7" width="2" height="4.4" fill="#000" stroke="#44cedd"/>
<path d="M630.5 606.8V610.4" stroke="#38bccc"/>
<rect x="629.5" y="607.4" width="2" height="2.2" fill="#000" stroke="#44cedd"/>
<path d="M635.5 603.5V607.1" stroke="#38bccc"/>
<rect x="634.5" y="604.0" width="2" height="3.0" fill="#000" stroke="#44cedd"/>
<path d="M638.5 602.1V606.7" stroke="#38bccc"/>
<rect x="637.5" y="602.8" width="2" height="2.0" fill="#000" stroke="#44cedd"/>
<path d="M641.5 603.1V607.1" stroke="#38bccc"/>
<rect x="641" y="603.1" width="2" height="4.3" fill="#3ecfe0"/>
<path d="M643.5 602.9V607.8" stroke="#38bccc"/>
<rect x="642.5" y="604.4" width="2" height="2.6" fill="#000" stroke="#44cedd"/>
<path d="M646.5 602.5V607.1" stroke="#38bccc"/>
<rect x="646" y="603.2" width="2" height="3.0" fill="#3ecfe0"/>
<path d="M648.5 603.6V607.2" stroke="#38bccc"/>
<rect x="648" y="604.5" width="2" height="3.0" fill="#3ecfe0"/>
<path d="M651.5 604.3V608.2" stroke="#38bccc"/>
<rect x="650.5" y="605.5" width="2" height="2.0" fill="#000" stroke="#44cedd"/>
<path d="M656.5 597.8V604.3" stroke="#38bccc"/>
<rect x="655.5" y="598.1" width="2" height="4.4" fill="#000" stroke="#44cedd"/>
<path d="M659.5 595.9V600.7" stroke="#38bccc"/>
<rect x="658.5" y="596.7" width="2" height="2.0" fill="#000" stroke="#44cedd"/>
<path d="M661.5 594.2V599.1" stroke="#38bccc"/>
<rect x="660.5" y="595.8" width="2" height="2.0" fill="#000" stroke="#44cedd"/>
<path d="M667.5 593.6V600.4" stroke="#38bccc"/>
<rect x="666.5" y="595.3" width="2" height="3.3" fill="#000" stroke="#44cedd"/>
<path d="M669.5 590.9V595.7" stroke="#38bccc"/>
<rect x="668.5" y="591.1" width="2" height="4.2" fill="#000" stroke="#44cedd"/>
<path d="M672.5 589.2V593.8" stroke="#38bccc"/>
<rect x="672" y="590.6" width="2" height="3.0" fill="#3ecfe0"/>
<path d="M674.5 590.8V594.8" stroke="#38bccc"/>
<rect x="673.5" y="591.3" width="2" height="2.0" fill="#000" stroke="#44cedd"/>
<path d="M680.5 589.5V592.7" stroke="#38bccc"/>
<rect x="679.5" y="590.0" width="2" height="2.0" fill="#000" stroke="#44cedd"/>
<path d="M682.5 586.0V591.5" stroke="#38bccc"/>
<rect x="681.5" y="586.5" width="2" height="3.8" fill="#000" stroke="#44cedd"/>
<path d="M685.5 585.1V587.8" stroke="#38bccc"/>
<rect x="684.5" y="585.1" width="2" height="2.0" fill="#000" stroke="#44cedd"/>
<path d="M690.5 579.7V585.3" stroke="#38bccc"/>
<rect x="689.5" y="581.3" width="2" height="2.9" fill="#000" stroke="#44cedd"/>
<path d="M695.5 579.3V582.8" stroke="#38bccc"/>
<rect x="695" y="580.1" width="2" height="3.0" fill="#3ecfe0"/>
<path d="M698.5 580.4V583.8" stroke="#38bccc"/>
<rect x="697.5" y="581.2" width="2" height="2.0" fill="#000" stroke="#44cedd"/>
<path d="M700.5 581.3V585.0" stroke="#38bccc"/>
<rect x="700" y="581.4" width="2" height="3.0" fill="#3ecfe0"/>
<path d="M703.5 581.3V587.1" stroke="#38bccc"/>
<rect x="703" y="582.6" width="2" height="3.0" fill="#3ecfe0"/>
<path d="M708.5 584.2V588.0" stroke="#38bccc"/>
<rect x="708" y="583.7" width="2" height="3.0" fill="#3ecfe0"/>
<path d="M711.5 583.5V588.0" stroke="#38bccc"/>
<rect x="710.5" y="584.3" width="2" height="2.0" fill="#000" stroke="#44cedd"/>
<path d="M716.5 580.8V586.5" stroke="#38bccc"/>
<rect x="715.5" y="582.1" width="2" height="2.6" fill="#000" stroke="#44cedd"/>
<path d="M719.5 579.9V583.6" stroke="#38bccc"/>
<rect x="718.5" y="580.6" width="2" height="2.0" fill="#000" stroke="#44cedd"/>
<path d="M721.5 578.4V583.3" stroke="#38bccc"/>
<rect x="720.5" y="579.5" width="2" height="2.0" fill="#000" stroke="#44cedd"/>
<path d="M724.5 576.5V582.0" stroke="#38bccc"/>
<rect x="723.5" y="578.1" width="2" height="2.0" fill="#000" stroke="#44cedd"/>
<path d="M729.5 576.9V580.0" stroke="#38bccc"/>
<rect x="729" y="577.4" width="2" height="3.0" fill="#3ecfe0"/>
<path d="M732.5 576.6V581.6" stroke="#38bccc"/>
<rect x="731.5" y="578.4" width="2" height="2.0" fill="#000" stroke="#44cedd"/>
<path d="M737.5 575.2V579.7" stroke="#38bccc"/>
<rect x="736.5" y="576.0" width="2" height="2.0" fill="#000" stroke="#44cedd"/>
<path d="M742.5 572.9V577.0" stroke="#38bccc"/>
<rect x="741.5" y="574.0" width="2" height="2.2" fill="#000" stroke="#44cedd"/>
<path d="M745.5 571.4V576.6" stroke="#38bccc"/>
<rect x="744.5" y="572.8" width="2" height="2.0" fill="#000" stroke="#44cedd"/>
<path d="M747.5 570.7V574.3" stroke="#38bccc"/>
<rect x="746.5" y="572.2" width="2" height="2.0" fill="#000" stroke="#44cedd"/>
<path d="M752.5 571.8V575.7" stroke="#38bccc"/>
<rect x="751.5" y="573.1" width="2" height="2.0" fill="#000" stroke="#44cedd"/>
<path d="M755.5 571.0V575.1" stroke="#38bccc"/>
<rect x="754.5" y="571.8" width="2" height="2.0" fill="#000" stroke="#44cedd"/>
<path d="M758.5 571.2V574.5" stroke="#38bccc"/>
<rect x="757.5" y="571.2" width="2" height="2.0" fill="#000" stroke="#44cedd"/>
<path d="M760.5 569.4V574.5" stroke="#38bccc"/>
<rect x="759.5" y="571.0" width="2" height="2.0" fill="#000" stroke="#44cedd"/>
<path d="M768.5 565.7V568.7" stroke="#38bccc"/>
<rect x="767.5" y="565.9" width="2" height="2.0" fill="#000" stroke="#44cedd"/>
</g>
<path d="M182 583 C185.0 582.8 194.5 582.5 200 582 C205.5 581.5 210.0 580.5 215 580 C220.0 579.5 224.2 579.5 230 579 C235.8 578.5 243.3 577.7 250 577 C256.7 576.3 263.3 575.7 270 575 C276.7 574.3 281.7 573.5 290 573 C298.3 572.5 310.0 572.2 320 572 C330.0 571.8 341.7 572.0 350 572 C358.3 572.0 363.3 571.8 370 572 C376.7 572.2 383.3 572.2 390 573 C396.7 573.8 405.0 576.0 410 577 C415.0 578.0 414.2 578.2 420 579 C425.8 579.8 436.7 580.8 445 582 C453.3 583.2 462.5 584.7 470 586 C477.5 587.3 483.3 589.0 490 590 C496.7 591.0 503.3 591.7 510 592 C516.7 592.3 523.3 592.0 530 592 C536.7 592.0 543.3 591.7 550 592 C556.7 592.3 563.3 593.2 570 594 C576.7 594.8 583.3 596.2 590 597 C596.7 597.8 605.0 598.2 610 599 C615.0 599.8 615.0 601.0 620 602 C625.0 603.0 633.3 604.7 640 605 C646.7 605.3 653.3 604.7 660 604 C666.7 603.3 673.3 602.5 680 601 C686.7 599.5 693.3 596.8 700 595 C706.7 593.2 713.3 592.0 720 590 C726.7 588.0 734.2 585.3 740 583 C745.8 580.7 750.0 578.2 755 576 C760.0 573.8 765.8 571.5 770 570 C774.2 568.5 775.0 569.5 780 567 C785.0 564.5 793.3 558.3 800 555 C806.7 551.7 813.3 549.2 820 547 C826.7 544.8 833.3 543.3 840 542 C846.7 540.7 853.3 539.5 860 539 C866.7 538.5 873.3 538.8 880 539 C886.7 539.2 893.3 539.7 900 540 C906.7 540.3 913.3 541.0 920 541 C926.7 541.0 933.3 540.7 940 540 C946.7 539.3 955.0 537.5 960 537 C965.0 536.5 965.2 537.5 970 536.7 C974.8 535.9 983.7 533.5 989 532 C994.3 530.5 996.8 530.3 1002 528 C1007.2 525.7 1012.8 521.2 1020 518 C1027.2 514.8 1038.3 511.8 1045 509 C1051.7 506.2 1053.7 503.7 1060 501 C1066.3 498.3 1076.3 495.2 1083 493 C1089.7 490.8 1094.3 489.2 1100 488 C1105.7 486.8 1111.0 486.7 1117 486 C1123.0 485.3 1129.5 484.5 1136 484 C1142.5 483.5 1150.7 483.8 1156 483 C1161.3 482.2 1162.5 481.0 1168 479 C1173.5 477.0 1182.0 474.0 1189 471 C1196.0 468.0 1204.0 464.5 1210 461 C1216.0 457.5 1220.3 453.3 1225 450 C1229.7 446.7 1233.2 444.0 1238 441 C1242.8 438.0 1248.8 435.7 1254 432 C1259.2 428.3 1263.8 423.7 1269 419 C1274.2 414.3 1279.8 409.7 1285 404 C1290.2 398.3 1295.2 392.5 1300 385 C1304.8 377.5 1309.3 369.0 1314 359 C1318.7 349.0 1323.5 336.0 1328 325 C1332.5 314.0 1337.3 301.5 1341 293 C1344.7 284.5 1347.0 279.3 1350 274 C1353.0 268.7 1355.8 264.8 1359 261 C1362.2 257.2 1365.8 253.7 1369 251 C1372.2 248.3 1374.8 247.0 1378 245 C1381.2 243.0 1385.2 240.5 1388 239 C1390.8 237.5 1392.8 236.2 1395 236 C1397.2 235.8 1398.8 236.8 1401 238 C1403.2 239.2 1405.5 240.8 1408 243 C1410.5 245.2 1414.0 249.0 1416 251 C1418.0 253.0 1418.5 252.8 1420 255 C1421.5 257.2 1423.0 261.2 1425 264 C1427.0 266.8 1429.5 270.0 1432 272 C1434.5 274.0 1437.2 275.7 1440 276 C1442.8 276.3 1446.0 275.0 1449 274 C1452.0 273.0 1455.7 271.3 1458 270 C1460.3 268.7 1461.5 267.0 1463 266 C1464.5 265.0 1466.3 264.3 1467 264" fill="none" stroke="#b8208c" stroke-width="1.2"/>
<path d="M102 583 C103.3 583.3 107.5 584.2 110 585 C112.5 585.8 112.8 587.2 117 588 C121.2 588.8 129.5 590.0 135 590 C140.5 590.0 145.0 588.8 150 588 C155.0 587.2 160.0 585.8 165 585 C170.0 584.2 175.8 584.2 180 583 C184.2 581.8 186.7 579.5 190 578 C193.3 576.5 195.8 575.3 200 574 C204.2 572.7 210.0 570.8 215 570 C220.0 569.2 224.2 568.7 230 569 C235.8 569.3 243.3 571.0 250 572 C256.7 573.0 264.7 574.3 270 575 C275.3 575.7 277.0 576.0 282 576 C287.0 576.0 293.7 575.7 300 575 C306.3 574.3 313.3 572.8 320 572 C326.7 571.2 333.3 570.7 340 570 C346.7 569.3 355.0 568.2 360 568 C365.0 567.8 365.8 568.3 370 569 C374.2 569.7 380.8 570.5 385 572 C389.2 573.5 391.7 575.8 395 578 C398.3 580.2 400.8 583.0 405 585 C409.2 587.0 415.5 588.8 420 590 C424.5 591.2 427.8 591.3 432 592 C436.2 592.7 440.3 593.7 445 594 C449.7 594.3 455.8 594.5 460 594 C464.2 593.5 466.7 591.7 470 591 C473.3 590.3 475.0 590.2 480 590 C485.0 589.8 493.3 590.0 500 590 C506.7 590.0 513.3 590.0 520 590 C526.7 590.0 535.3 589.7 540 590 C544.7 590.3 544.7 590.8 548 592 C551.3 593.2 556.0 595.7 560 597 C564.0 598.3 568.0 599.0 572 600 C576.0 601.0 580.2 601.8 584 603 C587.8 604.2 591.3 606.2 595 607 C598.7 607.8 601.8 607.8 606 608 C610.2 608.2 614.3 608.0 620 608 C625.7 608.0 634.2 608.3 640 608 C645.8 607.7 650.8 606.8 655 606 C659.2 605.2 660.8 604.5 665 603 C669.2 601.5 675.0 599.2 680 597 C685.0 594.8 690.0 592.8 695 590 C700.0 587.2 705.0 582.7 710 580 C715.0 577.3 720.0 576.3 725 574 C730.0 571.7 735.0 567.8 740 566 C745.0 564.2 750.0 564.3 755 563 C760.0 561.7 765.8 559.3 770 558 C774.2 556.7 775.8 557.2 780 555 C784.2 552.8 790.8 547.8 795 545 C799.2 542.2 801.7 539.8 805 538 C808.3 536.2 810.8 534.5 815 534 C819.2 533.5 825.8 534.8 830 535 C834.2 535.2 836.7 534.2 840 535 C843.3 535.8 846.7 539.0 850 540 C853.3 541.0 856.7 540.7 860 541 C863.3 541.3 866.7 541.3 870 542 C873.3 542.7 876.7 545.0 880 545 C883.3 545.0 886.7 542.8 890 542 C893.3 541.2 895.8 540.7 900 540 C904.2 539.3 910.8 538.7 915 538 C919.2 537.3 920.8 536.2 925 536 C929.2 535.8 935.0 536.8 940 537 C945.0 537.2 950.0 537.5 955 537 C960.0 536.5 964.7 535.7 970 534 C975.3 532.3 981.7 530.3 987 527 C992.3 523.7 996.2 518.8 1002 514 C1007.8 509.2 1016.7 501.0 1022 498 C1027.3 495.0 1029.2 496.5 1034 496 C1038.8 495.5 1045.8 494.8 1051 495 C1056.2 495.2 1059.3 498.2 1065 497 C1070.7 495.8 1078.2 491.3 1085 488 C1091.8 484.7 1100.3 478.8 1106 477 C1111.7 475.2 1115.2 476.5 1119 477 C1122.8 477.5 1125.5 478.7 1129 480 C1132.5 481.3 1136.5 483.5 1140 485 C1143.5 486.5 1146.8 488.8 1150 489 C1153.2 489.2 1156.0 487.7 1159 486 C1162.0 484.3 1165.2 482.3 1168 479 C1170.8 475.7 1173.0 470.3 1176 466 C1179.0 461.7 1182.5 456.7 1186 453 C1189.5 449.3 1193.3 446.7 1197 444 C1200.7 441.3 1204.3 437.5 1208 437 C1211.7 436.5 1215.7 441.3 1219 441 C1222.3 440.7 1224.8 437.2 1228 435 C1231.2 432.8 1235.2 429.3 1238 428 C1240.8 426.7 1242.3 429.3 1245 427 C1247.7 424.7 1250.8 418.3 1254 414 C1257.2 409.7 1261.0 404.0 1264 401 C1267.0 398.0 1269.3 399.8 1272 396 C1274.7 392.2 1277.0 384.0 1280 378 C1283.0 372.0 1286.8 365.0 1290 360 C1293.2 355.0 1295.8 354.5 1299 348 C1302.2 341.5 1305.8 332.0 1309 321 C1312.2 310.0 1315.5 292.2 1318 282 C1320.5 271.8 1322.2 266.8 1324 260 C1325.8 253.2 1327.2 247.0 1329 241 C1330.8 235.0 1333.0 229.0 1335 224 C1337.0 219.0 1339.2 214.8 1341 211 C1342.8 207.2 1344.5 203.0 1346 201 C1347.5 199.0 1348.7 198.7 1350 199 C1351.3 199.3 1352.7 201.3 1354 203 C1355.3 204.7 1356.2 206.2 1358 209 C1359.8 211.8 1362.5 215.3 1365 220 C1367.5 224.7 1370.7 230.7 1373 237 C1375.3 243.3 1377.2 253.3 1379 258 C1380.8 262.7 1381.3 263.7 1384 265 C1386.7 266.3 1392.2 264.2 1395 266 C1397.8 267.8 1399.5 273.7 1401 276 C1402.5 278.3 1402.5 279.8 1404 280 C1405.5 280.2 1408.0 276.7 1410 277 C1412.0 277.3 1413.8 278.8 1416 282 C1418.2 285.2 1421.2 292.7 1423 296 C1424.8 299.3 1425.5 301.3 1427 302 C1428.5 302.7 1430.3 301.7 1432 300 C1433.7 298.3 1435.0 295.2 1437 292 C1439.0 288.8 1441.8 284.7 1444 281 C1446.2 277.3 1448.5 273.5 1450 270 C1451.5 266.5 1451.7 265.2 1453 260 C1454.3 254.8 1456.3 244.0 1458 239 C1459.7 234.0 1461.7 231.5 1463 230 C1464.3 228.5 1465.5 230.0 1466 230" fill="none" stroke="#1f9a2c" stroke-width="1.2"/>
<g shape-rendering="crispEdges" stroke-width="1">
<path d="M56.5 571.2V574.3" stroke="#b4b4b4"/>
<rect x="56" y="571.7" width="2" height="3.0" fill="#2484f4"/>
<path d="M58.5 571.2V575.4" stroke="#b4b4b4"/>
<rect x="58" y="572.6" width="2" height="3.0" fill="#2484f4"/>
<path d="M61.5 572.8V578.3" stroke="#b4b4b4"/>
<rect x="61" y="573.7" width="2" height="3.4" fill="#2484f4"/>
<path d="M63.5 574.0V578.9" stroke="#b4b4b4"/>
<rect x="62.5" y="575.0" width="2" height="2.0" fill="#3a3a3a" stroke="#f0f0f0"/>
<path d="M69.5 577.7V580.6" stroke="#b4b4b4"/>
<rect x="68.5" y="577.9" width="2" height="2.0" fill="#3a3a3a" stroke="#f0f0f0"/>
<path d="M74.5 575.2V579.1" stroke="#b4b4b4"/>
<rect x="73.5" y="576.8" width="2" height="2.0" fill="#3a3a3a" stroke="#f0f0f0"/>
<path d="M76.5 575.7V578.7" stroke="#b4b4b4"/>
<rect x="75.5" y="576.1" width="2" height="2.0" fill="#3a3a3a" stroke="#f0f0f0"/>
<path d="M79.5 576.0V578.5" stroke="#b4b4b4"/>
<rect x="79" y="575.6" width="2" height="3.0" fill="#2484f4"/>
<path d="M82.5 576.0V581.1" stroke="#b4b4b4"/>
<rect x="82" y="576.8" width="2" height="3.0" fill="#2484f4"/>
<path d="M84.5 578.8V583.7" stroke="#b4b4b4"/>
<rect x="84" y="578.5" width="2" height="4.7" fill="#2484f4"/>
<path d="M87.5 580.9V593.2" stroke="#b4b4b4"/>
<rect x="87" y="582.2" width="2" height="10.4" fill="#2484f4"/>
<path d="M89.5 590.1V594.3" stroke="#b4b4b4"/>
<rect x="88.5" y="590.3" width="2" height="2.0" fill="#3a3a3a" stroke="#f0f0f0"/>
<path d="M92.5 587.6V591.8" stroke="#b4b4b4"/>
<rect x="91.5" y="589.2" width="2" height="2.0" fill="#3a3a3a" stroke="#f0f0f0"/>
<path d="M95.5 588.5V592.7" stroke="#b4b4b4"/>
<rect x="95" y="588.7" width="2" height="3.0" fill="#2484f4"/>
<path d="M102.5 584.7V589.9" stroke="#b4b4b4"/>
<rect x="101.5" y="586.0" width="2" height="2.0" fill="#3a3a3a" stroke="#f0f0f0"/>
<path d="M105.5 585.0V587.6" stroke="#b4b4b4"/>
<rect x="105" y="585.1" width="2" height="3.0" fill="#2484f4"/>
<path d="M110.5 585.6V592.2" stroke="#b4b4b4"/>
<rect x="110" y="586.1" width="2" height="4.8" fill="#2484f4"/>
<path d="M113.5 586.6V590.4" stroke="#b4b4b4"/>
<rect x="112.5" y="587.9" width="2" height="2.5" fill="#3a3a3a" stroke="#f0f0f0"/>
<path d="M115.5 586.1V589.0" stroke="#b4b4b4"/>
<rect x="114.5" y="586.3" width="2" height="2.0" fill="#3a3a3a" stroke="#f0f0f0"/>
<path d="M118.5 584.4V587.9" stroke="#b4b4b4"/>
<rect x="117.5" y="585.5" width="2" height="2.0" fill="#3a3a3a" stroke="#f0f0f0"/>
<path d="M121.5 585.1V589.2" stroke="#b4b4b4"/>
<rect x="120.5" y="585.3" width="2" height="2.0" fill="#3a3a3a" stroke="#f0f0f0"/>
<path d="M126.5 579.0V584.7" stroke="#b4b4b4"/>
<rect x="125.5" y="580.7" width="2" height="2.5" fill="#3a3a3a" stroke="#f0f0f0"/>
<path d="M128.5 580.7V586.5" stroke="#b4b4b4"/>
<rect x="128" y="580.2" width="2" height="5.6" fill="#2484f4"/>
<path d="M131.5 584.0V590.4" stroke="#b4b4b4"/>
<rect x="131" y="584.7" width="2" height="5.3" fill="#2484f4"/>
<path d="M134.5 589.1V595.2" stroke="#b4b4b4"/>
<rect x="134" y="589.1" width="2" height="4.8" fill="#2484f4"/>
<path d="M136.5 588.6V593.9" stroke="#b4b4b4"/>
<rect x="135.5" y="589.4" width="2" height="4.0" fill="#3a3a3a" stroke="#f0f0f0"/>
<path d="M139.5 588.1V591.2" stroke="#b4b4b4"/>
<rect x="138.5" y="588.1" width="2" height="2.0" fill="#3a3a3a" stroke="#f0f0f0"/>
<path d="M144.5 585.5V592.0" stroke="#b4b4b4"/>
<rect x="143.5" y="586.5" width="2" height="4.2" fill="#3a3a3a" stroke="#f0f0f0"/>
<path d="M149.5 585.2V589.5" stroke="#b4b4b4"/>
<rect x="148.5" y="585.3" width="2" height="2.5" fill="#3a3a3a" stroke="#f0f0f0"/>
<path d="M152.5 584.8V588.5" stroke="#b4b4b4"/>
<rect x="152" y="584.3" width="2" height="3.0" fill="#2484f4"/>
<path d="M154.5 583.4V587.8" stroke="#b4b4b4"/>
<rect x="153.5" y="584.9" width="2" height="2.0" fill="#3a3a3a" stroke="#f0f0f0"/>
<path d="M162.5 579.4V584.5" stroke="#b4b4b4"/>
<rect x="161.5" y="580.8" width="2" height="2.0" fill="#3a3a3a" stroke="#f0f0f0"/>
<path d="M165.5 579.5V583.5" stroke="#b4b4b4"/>
<rect x="165" y="580.1" width="2" height="3.0" fill="#2484f4"/>
<path d="M167.5 579.6V583.5" stroke="#b4b4b4"/>
<rect x="166.5" y="580.2" width="2" height="2.0" fill="#3a3a3a" stroke="#f0f0f0"/>
<path d="M170.5 576.9V580.7" stroke="#b4b4b4"/>
<rect x="169.5" y="578.7" width="2" height="2.0" fill="#3a3a3a" stroke="#f0f0f0"/>
<path d="M173.5 571.9V580.6" stroke="#b4b4b4"/>
<rect x="172.5" y="573.4" width="2" height="5.3" fill="#3a3a3a" stroke="#f0f0f0"/>
<path d="M175.5 569.9V574.3" stroke="#b4b4b4"/>
<rect x="174.5" y="571.6" width="2" height="2.0" fill="#3a3a3a" stroke="#f0f0f0"/>
<path d="M178.5 568.3V573.3" stroke="#b4b4b4"/>
<rect x="177.5" y="569.6" width="2" height="2.3" fill="#3a3a3a" stroke="#f0f0f0"/>
<path d="M180.5 568.6V573.5" stroke="#b4b4b4"/>
<rect x="180" y="569.1" width="2" height="3.3" fill="#2484f4"/>
<path d="M183.5 570.4V574.7" stroke="#b4b4b4"/>
<rect x="183" y="570.8" width="2" height="3.0" fill="#2484f4"/>
<path d="M186.5 570.7V574.4" stroke="#b4b4b4"/>
<rect x="185.5" y="571.1" width="2" height="2.0" fill="#3a3a3a" stroke="#f0f0f0"/>
<path d="M188.5 568.7V571.6" stroke="#b4b4b4"/>
<rect x="187.5" y="569.0" width="2" height="2.5" fill="#3a3a3a" stroke="#f0f0f0"/>
<path d="M191.5 567.0V570.0" stroke="#b4b4b4"/>
<rect x="190.5" y="567.7" width="2" height="2.0" fill="#3a3a3a" stroke="#f0f0f0"/>
<path d="M196.5 565.7V570.6" stroke="#b4b4b4"/>
<rect x="196" y="566.6" width="2" height="3.0" fill="#2484f4"/>
<path d="M199.5 565.1V570.5" stroke="#b4b4b4"/>
<rect x="198.5" y="565.9" width="2" height="3.0" fill="#3a3a3a" stroke="#f0f0f0"/>
<path d="M201.5 565.7V569.6" stroke="#b4b4b4"/>
<rect x="201" y="565.4" width="2" height="3.0" fill="#2484f4"/>
<path d="M204.5 566.5V569.1" stroke="#b4b4b4"/>
<rect x="203.5" y="566.7" width="2" height="2.0" fill="#3a3a3a" stroke="#f0f0f0"/>
<path d="M209.5 562.7V567.6" stroke="#b4b4b4"/>
<rect x="209" y="563.5" width="2" height="3.0" fill="#2484f4"/>
<path d="M212.5 564.0V566.4" stroke="#b4b4b4"/>
<rect x="211.5" y="564.2" width="2" height="2.0" fill="#3a3a3a" stroke="#f0f0f0"/>
<path d="M214.5 562.6V566.1" stroke="#b4b4b4"/>
<rect x="213.5" y="563.2" width="2" height="2.0" fill="#3a3a3a" stroke="#f0f0f0"/>
<path d="M217.5 560.1V565.5" stroke="#b4b4b4"/>
<rect x="216.5" y="560.6" width="2" height="3.4" fill="#3a3a3a" stroke="#f0f0f0"/>
<path d="M219.5 558.7V563.7" stroke="#b4b4b4"/>
<rect x="219" y="560.1" width="2" height="3.1" fill="#2484f4"/>
<path d="M222.5 562.7V567.5" stroke="#b4b4b4"/>
<rect x="222" y="562.2" width="2" height="5.0" fill="#2484f4"/>
<path d="M225.5 565.4V569.5" stroke="#b4b4b4"/>
<rect x="225" y="565.6" width="2" height="3.0" fill="#2484f4"/>
<path d="M227.5 565.7V569.6" stroke="#b4b4b4"/>
<rect x="227" y="566.9" width="2" height="3.0" fill="#2484f4"/>
<path d="M232.5 568.7V574.2" stroke="#b4b4b4"/>
<rect x="231.5" y="570.2" width="2" height="2.0" fill="#3a3a3a" stroke="#f0f0f0"/>
<path d="M235.5 569.5V574.1" stroke="#b4b4b4"/>
<rect x="235" y="570.0" width="2" height="3.0" fill="#2484f4"/>
<path d="M238.5 571.8V576.3" stroke="#b4b4b4"/>
<rect x="238" y="572.0" width="2" height="3.2" fill="#2484f4"/>
<path d="M240.5 573.9V576.9" stroke="#b4b4b4"/>
<rect x="240" y="574.0" width="2" height="3.0" fill="#2484f4"/>
<path d="M243.5 576.0V579.6" stroke="#b4b4b4"/>
<rect x="243" y="575.7" width="2" height="3.1" fill="#2484f4"/>
<path d="M245.5 573.4V579.9" stroke="#b4b4b4"/>
<rect x="244.5" y="574.8" width="2" height="3.5" fill="#3a3a3a" stroke="#f0f0f0"/>
<path d="M248.5 573.3V576.9" stroke="#b4b4b4"/>
<rect x="248" y="573.6" width="2" height="3.0" fill="#2484f4"/>
<path d="M256.5 572.1V577.4" stroke="#b4b4b4"/>
<rect x="255.5" y="573.9" width="2" height="2.5" fill="#3a3a3a" stroke="#f0f0f0"/>
<path d="M258.5 573.4V576.8" stroke="#b4b4b4"/>
<rect x="258" y="573.4" width="2" height="3.0" fill="#2484f4"/>
<path d="M261.5 574.2V579.0" stroke="#b4b4b4"/>
<rect x="261" y="575.2" width="2" height="3.0" fill="#2484f4"/>
<path d="M264.5 576.2V580.2" stroke="#b4b4b4"/>
<rect x="263.5" y="576.5" width="2" height="2.0" fill="#3a3a3a" stroke="#f0f0f0"/>
<path d="M266.5 576.7V579.9" stroke="#b4b4b4"/>
<rect x="266" y="576.5" width="2" height="3.0" fill="#2484f4"/>
<path d="M269.5 577.5V580.7" stroke="#b4b4b4"/>
<rect x="269" y="577.3" width="2" height="3.0" fill="#2484f4"/>
<path d="M271.5 577.4V580.4" stroke="#b4b4b4"/>
<rect x="270.5" y="577.7" width="2" height="2.0" fill="#3a3a3a" stroke="#f0f0f0"/>
<path d="M274.5 575.9V578.8" stroke="#b4b4b4"/>
<rect x="273.5" y="576.2" width="2" height="2.3" fill="#3a3a3a" stroke="#f0f0f0"/>
<path d="M277.5 571.9V576.6" stroke="#b4b4b4"/>
<rect x="276.5" y="573.0" width="2" height="3.3" fill="#3a3a3a" stroke="#f0f0f0"/>
<path d="M282.5 570.8V575.0" stroke="#b4b4b4"/>
<rect x="282" y="570.5" width="2" height="3.0" fill="#2484f4"/>
<path d="M284.5 567.0V574.0" stroke="#b4b4b4"/>
<rect x="283.5" y="569.0" width="2" height="3.5" fill="#3a3a3a" stroke="#f0f0f0"/>
<path d="M287.5 568.6V573.3" stroke="#b4b4b4"/>
<rect x="287" y="568.5" width="2" height="4.0" fill="#2484f4"/>
<path d="M290.5 569.4V572.3" stroke="#b4b4b4"/>
<rect x="289.5" y="570.2" width="2" height="2.0" fill="#3a3a3a" stroke="#f0f0f0"/>
<path d="M292.5 569.1V574.0" stroke="#b4b4b4"/>
<rect x="292" y="570.0" width="2" height="3.5" fill="#2484f4"/>
<path d="M295.5 572.7V576.7" stroke="#b4b4b4"/>
<rect x="295" y="572.5" width="2" height="3.5" fill="#2484f4"/>
<path d="M297.5 573.1V577.7" stroke="#b4b4b4"/>
<rect x="297" y="574.4" width="2" height="3.0" fill="#2484f4"/>
<path d="M300.5 574.4V577.7" stroke="#b4b4b4"/>
<rect x="299.5" y="575.2" width="2" height="2.0" fill="#3a3a3a" stroke="#f0f0f0"/>
<path d="M303.5 573.1V578.0" stroke="#b4b4b4"/>
<rect x="302.5" y="574.6" width="2" height="2.0" fill="#3a3a3a" stroke="#f0f0f0"/>
<path d="M305.5 572.4V576.6" stroke="#b4b4b4"/>
<rect x="304.5" y="573.7" width="2" height="2.0" fill="#3a3a3a" stroke="#f0f0f0"/>
<path d="M308.5 570.9V575.0" stroke="#b4b4b4"/>
<rect x="307.5" y="571.1" width="2" height="3.1" fill="#3a3a3a" stroke="#f0f0f0"/>
<path d="M310.5 569.2V572.9" stroke="#b4b4b4"/>
<rect x="310" y="569.9" width="2" height="3.0" fill="#2484f4"/>
<path d="M313.5 568.1V572.5" stroke="#b4b4b4"/>
<rect x="312.5" y="569.3" width="2" height="2.4" fill="#3a3a3a" stroke="#f0f0f0"/>
<path d="M316.5 567.9V571.6" stroke="#b4b4b4"/>
<rect x="315.5" y="568.3" width="2" height="2.0" fill="#3a3a3a" stroke="#f0f0f0"/>
<path d="M318.5 567.0V571.9" stroke="#b4b4b4"/>
<rect x="317.5" y="568.0" width="2" height="2.0" fill="#3a3a3a" stroke="#f0f0f0"/>
<path d="M321.5 564.6V570.2" stroke="#b4b4b4"/>
<rect x="320.5" y="564.9" width="2" height="3.7" fill="#3a3a3a" stroke="#f0f0f0"/>
<path d="M323.5 564.7V568.1" stroke="#b4b4b4"/>
<rect x="323" y="564.4" width="2" height="3.0" fill="#2484f4"/>
<path d="M326.5 564.2V568.5" stroke="#b4b4b4"/>
<rect x="325.5" y="565.3" width="2" height="2.0" fill="#3a3a3a" stroke="#f0f0f0"/>
<path d="M329.5 564.7V569.4" stroke="#b4b4b4"/>
<rect x="329" y="565.0" width="2" height="3.0" fill="#2484f4"/>
<path d="M331.5 564.8V569.1" stroke="#b4b4b4"/>
<rect x="330.5" y="565.5" width="2" height="2.0" fill="#3a3a3a" stroke="#f0f0f0"/>
<path d="M334.5 564.0V566.8" stroke="#b4b4b4"/>
<rect x="333.5" y="564.7" width="2" height="2.0" fill="#3a3a3a" stroke="#f0f0f0"/>
<path d="M336.5 564.9V567.8" stroke="#b4b4b4"/>
<rect x="336" y="564.4" width="2" height="3.0" fill="#2484f4"/>
<path d="M339.5 564.7V568.0" stroke="#b4b4b4"/>
<rect x="339" y="565.0" width="2" height="3.0" fill="#2484f4"/>
<path d="M342.5 563.5V568.4" stroke="#b4b4b4"/>
<rect x="341.5" y="565.4" width="2" height="2.0" fill="#3a3a3a" stroke="#f0f0f0"/>
<path d="M344.5 564.2V567.4" stroke="#b4b4b4"/>
<rect x="343.5" y="565.0" width="2" height="2.0" fill="#3a3a3a" stroke="#f0f0f0"/>
<path d="M347.5 563.2V568.1" stroke="#b4b4b4"/>
<rect x="346.5" y="564.8" width="2" height="2.0" fill="#3a3a3a" stroke="#f0f0f0"/>
<path d="M349.5 564.9V569.3" stroke="#b4b4b4"/>
<rect x="349" y="564.9" width="2" height="3.0" fill="#2484f4"/>
<path d="M352.5 564.4V569.6" stroke="#b4b4b4"/>
<rect x="351.5" y="566.0" width="2" height="2.0" fill="#3a3a3a" stroke="#f0f0f0"/>
<path d="M355.5 565.2V568.6" stroke="#b4b4b4"/>
<rect x="355" y="565.8" width="2" height="3.0" fill="#2484f4"/>
<path d="M357.5 566.0V570.9" stroke="#b4b4b4"/>
<rect x="357" y="567.2" width="2" height="3.7" fill="#2484f4"/>
<path d="M360.5 569.0V572.2" stroke="#b4b4b4"/>
<rect x="360" y="569.4" width="2" height="3.0" fill="#2484f4"/>
<path d="M362.5 570.4V573.5" stroke="#b4b4b4"/>
<rect x="362" y="570.5" width="2" height="3.0" fill="#2484f4"/>
<path d="M365.5 571.8V576.4" stroke="#b4b4b4"/>
<rect x="365" y="572.1" width="2" height="3.5" fill="#2484f4"/>
<path d="M368.5 573.3V579.3" stroke="#b4b4b4"/>
<rect x="368" y="574.6" width="2" height="3.4" fill="#2484f4"/>
<path d="M370.5 574.2V579.6" stroke="#b4b4b4"/>
<rect x="369.5" y="576.0" width="2" height="2.0" fill="#3a3a3a" stroke="#f0f0f0"/>
<path d="M373.5 575.0V578.3" stroke="#b4b4b4"/>
<rect x="373" y="575.8" width="2" height="3.0" fill="#2484f4"/>
<path d="M375.5 576.2V580.0" stroke="#b4b4b4"/>
<rect x="375" y="577.0" width="2" height="3.0" fill="#2484f4"/>
<path d="M381.5 579.7V582.7" stroke="#b4b4b4"/>
<rect x="381" y="579.9" width="2" height="3.0" fill="#2484f4"/>
<path d="M383.5 581.8V587.5" stroke="#b4b4b4"/>
<rect x="383" y="581.7" width="2" height="4.5" fill="#2484f4"/>
<path d="M386.5 583.4V588.6" stroke="#b4b4b4"/>
<rect x="386" y="584.3" width="2" height="3.0" fill="#2484f4"/>
<path d="M388.5 585.5V589.5" stroke="#b4b4b4"/>
<rect x="388" y="585.4" width="2" height="3.2" fill="#2484f4"/>
<path d="M391.5 586.6V591.2" stroke="#b4b4b4"/>
<rect x="391" y="586.9" width="2" height="3.0" fill="#2484f4"/>
<path d="M394.5 588.2V591.0" stroke="#b4b4b4"/>
<rect x="394" y="588.2" width="2" height="3.0" fill="#2484f4"/>
<path d="M401.5 590.4V595.2" stroke="#b4b4b4"/>
<rect x="401" y="591.0" width="2" height="3.0" fill="#2484f4"/>
<path d="M404.5 590.2V594.3" stroke="#b4b4b4"/>
<rect x="403.5" y="591.1" width="2" height="2.0" fill="#3a3a3a" stroke="#f0f0f0"/>
<path d="M407.5 590.8V595.5" stroke="#b4b4b4"/>
<rect x="407" y="591.0" width="2" height="4.1" fill="#2484f4"/>
<path d="M412.5 595.4V598.7" stroke="#b4b4b4"/>
<rect x="412" y="595.0" width="2" height="3.0" fill="#2484f4"/>
<path d="M414.5 595.8V600.4" stroke="#b4b4b4"/>
<rect x="414" y="595.9" width="2" height="3.0" fill="#2484f4"/>
<path d="M417.5 595.4V599.2" stroke="#b4b4b4"/>
<rect x="416.5" y="597.2" width="2" height="2.0" fill="#3a3a3a" stroke="#f0f0f0"/>
<path d="M420.5 596.7V601.1" stroke="#b4b4b4"/>
<rect x="420" y="596.9" width="2" height="3.0" fill="#2484f4"/>
<path d="M422.5 596.1V600.7" stroke="#b4b4b4"/>
<rect x="421.5" y="597.1" width="2" height="2.0" fill="#3a3a3a" stroke="#f0f0f0"/>
<path d="M425.5 595.1V599.1" stroke="#b4b4b4"/>
<rect x="424.5" y="596.0" width="2" height="2.0" fill="#3a3a3a" stroke="#f0f0f0"/>
<path d="M427.5 594.7V599.2" stroke="#b4b4b4"/>
<rect x="427" y="595.9" width="2" height="3.0" fill="#2484f4"/>
<path d="M430.5 594.8V600.2" stroke="#b4b4b4"/>
<rect x="429.5" y="595.8" width="2" height="2.5" fill="#3a3a3a" stroke="#f0f0f0"/>
<path d="M433.5 593.6V596.9" stroke="#b4b4b4"/>
<rect x="432.5" y="594.3" width="2" height="2.0" fill="#3a3a3a" stroke="#f0f0f0"/>
<path d="M435.5 590.4V596.4" stroke="#b4b4b4"/>
<rect x="434.5" y="591.6" width="2" height="3.2" fill="#3a3a3a" stroke="#f0f0f0"/>
<path d="M438.5 587.8V592.7" stroke="#b4b4b4"/>
<rect x="437.5" y="589.5" width="2" height="2.1" fill="#3a3a3a" stroke="#f0f0f0"/>
<path d="M440.5 588.9V591.3" stroke="#b4b4b4"/>
<rect x="440" y="588.4" width="2" height="3.0" fill="#2484f4"/>
<path d="M443.5 588.9V595.6" stroke="#b4b4b4"/>
<rect x="443" y="589.7" width="2" height="4.8" fill="#2484f4"/>
<path d="M446.5 592.0V596.5" stroke="#b4b4b4"/>
<rect x="446" y="592.7" width="2" height="3.0" fill="#2484f4"/>
<path d="M448.5 591.7V595.5" stroke="#b4b4b4"/>
<rect x="447.5" y="593.1" width="2" height="2.0" fill="#3a3a3a" stroke="#f0f0f0"/>
<path d="M451.5 591.1V594.9" stroke="#b4b4b4"/>
<rect x="450.5" y="592.7" width="2" height="2.0" fill="#3a3a3a" stroke="#f0f0f0"/>
<path d="M456.5 589.3V593.3" stroke="#b4b4b4"/>
<rect x="456" y="590.1" width="2" height="3.0" fill="#2484f4"/>
<path d="M459.5 589.5V593.1" stroke="#b4b4b4"/>
<rect x="458.5" y="590.6" width="2" height="2.0" fill="#3a3a3a" stroke="#f0f0f0"/>
<path d="M461.5 588.6V592.1" stroke="#b4b4b4"/>
<rect x="460.5" y="589.2" width="2" height="2.0" fill="#3a3a3a" stroke="#f0f0f0"/>
<path d="M464.5 588.8V592.0" stroke="#b4b4b4"/>
<rect x="464" y="588.4" width="2" height="3.0" fill="#2484f4"/>
<path d="M469.5 583.8V588.6" stroke="#b4b4b4"/>
<rect x="469" y="585.2" width="2" height="3.0" fill="#2484f4"/>
<path d="M472.5 582.2V588.7" stroke="#b4b4b4"/>
<rect x="471.5" y="583.4" width="2" height="3.5" fill="#3a3a3a" stroke="#f0f0f0"/>
<path d="M474.5 582.5V588.8" stroke="#b4b4b4"/>
<rect x="474" y="582.9" width="2" height="6.2" fill="#2484f4"/>
<path d="M477.5 587.7V590.1" stroke="#b4b4b4"/>
<rect x="477" y="587.5" width="2" height="3.0" fill="#2484f4"/>
<path d="M479.5 587.9V592.0" stroke="#b4b4b4"/>
<rect x="478.5" y="588.1" width="2" height="2.0" fill="#3a3a3a" stroke="#f0f0f0"/>
<path d="M482.5 588.0V590.3" stroke="#b4b4b4"/>
<rect x="482" y="587.8" width="2" height="3.0" fill="#2484f4"/>
<path d="M485.5 588.4V593.2" stroke="#b4b4b4"/>
<rect x="485" y="589.4" width="2" height="3.9" fill="#2484f4"/>
<path d="M487.5 589.0V594.5" stroke="#b4b4b4"/>
<rect x="486.5" y="590.4" width="2" height="2.4" fill="#3a3a3a" stroke="#f0f0f0"/>
<path d="M492.5 590.5V595.3" stroke="#b4b4b4"/>
<rect x="491.5" y="591.4" width="2" height="2.0" fill="#3a3a3a" stroke="#f0f0f0"/>
<path d="M495.5 588.7V592.2" stroke="#b4b4b4"/>
<rect x="494.5" y="590.2" width="2" height="2.0" fill="#3a3a3a" stroke="#f0f0f0"/>
<path d="M498.5 587.0V590.8" stroke="#b4b4b4"/>
<rect x="497.5" y="588.7" width="2" height="2.0" fill="#3a3a3a" stroke="#f0f0f0"/>
<path d="M500.5 588.0V592.1" stroke="#b4b4b4"/>
<rect x="500" y="587.9" width="2" height="3.0" fill="#2484f4"/>
<path d="M505.5 588.5V592.7" stroke="#b4b4b4"/>
<rect x="505" y="588.9" width="2" height="3.0" fill="#2484f4"/>
<path d="M508.5 588.5V592.5" stroke="#b4b4b4"/>
<rect x="507.5" y="589.2" width="2" height="2.0" fill="#3a3a3a" stroke="#f0f0f0"/>
<path d="M511.5 587.5V591.9" stroke="#b4b4b4"/>
<rect x="510.5" y="588.3" width="2" height="2.0" fill="#3a3a3a" stroke="#f0f0f0"/>
<path d="M513.5 587.0V590.7" stroke="#b4b4b4"/>
<rect x="513" y="587.6" width="2" height="3.0" fill="#2484f4"/>
<path d="M516.5 586.1V591.2" stroke="#b4b4b4"/>
<rect x="515.5" y="587.5" width="2" height="2.0" fill="#3a3a3a" stroke="#f0f0f0"/>
<path d="M518.5 585.6V591.2" stroke="#b4b4b4"/>
<rect x="518" y="587.0" width="2" height="3.0" fill="#2484f4"/>
<path d="M521.5 588.0V592.7" stroke="#b4b4b4"/>
<rect x="521" y="588.4" width="2" height="3.0" fill="#2484f4"/>
<path d="M524.5 587.8V592.8" stroke="#b4b4b4"/>
<rect x="523.5" y="589.0" width="2" height="2.0" fill="#3a3a3a" stroke="#f0f0f0"/>
<path d="M526.5 589.3V591.9" stroke="#b4b4b4"/>
<rect x="526" y="588.8" width="2" height="3.0" fill="#2484f4"/>
<path d="M529.5 587.8V593.2" stroke="#b4b4b4"/>
<rect x="528.5" y="589.4" width="2" height="2.0" fill="#3a3a3a" stroke="#f0f0f0"/>
<path d="M531.5 587.5V592.9" stroke="#b4b4b4"/>
<rect x="531" y="588.7" width="2" height="3.0" fill="#2484f4"/>
<path d="M534.5 588.9V598.3" stroke="#b4b4b4"/>
<rect x="534" y="590.1" width="2" height="7.1" fill="#2484f4"/>
<path d="M537.5 595.5V598.4" stroke="#b4b4b4"/>
<rect x="537" y="595.7" width="2" height="3.0" fill="#2484f4"/>
<path d="M539.5 595.3V599.2" stroke="#b4b4b4"/>
<rect x="538.5" y="595.7" width="2" height="2.0" fill="#3a3a3a" stroke="#f0f0f0"/>
<path d="M542.5 594.3V598.8" stroke="#b4b4b4"/>
<rect x="542" y="595.0" width="2" height="3.0" fill="#2484f4"/>
<path d="M544.5 595.4V599.5" stroke="#b4b4b4"/>
<rect x="543.5" y="596.0" width="2" height="2.0" fill="#3a3a3a" stroke="#f0f0f0"/>
<path d="M547.5 596.5V603.7" stroke="#b4b4b4"/>
<rect x="547" y="596.1" width="2" height="6.4" fill="#2484f4"/>
<path d="M550.5 600.9V607.4" stroke="#b4b4b4"/>
<rect x="550" y="601.5" width="2" height="4.5" fill="#2484f4"/>
<path d="M552.5 604.6V609.8" stroke="#b4b4b4"/>
<rect x="552" y="605.1" width="2" height="4.1" fill="#2484f4"/>
<path d="M557.5 608.4V612.2" stroke="#b4b4b4"/>
<rect x="557" y="608.6" width="2" height="3.0" fill="#2484f4"/>
<path d="M560.5 610.0V612.3" stroke="#b4b4b4"/>
<rect x="560" y="609.7" width="2" height="3.0" fill="#2484f4"/>
<path d="M563.5 611.4V615.1" stroke="#b4b4b4"/>
<rect x="563" y="611.1" width="2" height="3.1" fill="#2484f4"/>
<path d="M568.5 610.1V613.1" stroke="#b4b4b4"/>
<rect x="567.5" y="611.1" width="2" height="2.0" fill="#3a3a3a" stroke="#f0f0f0"/>
<path d="M570.5 606.6V612.2" stroke="#b4b4b4"/>
<rect x="569.5" y="608.3" width="2" height="2.9" fill="#3a3a3a" stroke="#f0f0f0"/>
<path d="M573.5 606.7V611.1" stroke="#b4b4b4"/>
<rect x="573" y="607.8" width="2" height="3.0" fill="#2484f4"/>
<path d="M576.5 608.2V613.7" stroke="#b4b4b4"/>
<rect x="576" y="609.3" width="2" height="3.0" fill="#2484f4"/>
<path d="M586.5 604.8V609.6" stroke="#b4b4b4"/>
<rect x="586" y="605.2" width="2" height="3.0" fill="#2484f4"/>
<path d="M591.5 606.7V610.8" stroke="#b4b4b4"/>
<rect x="590.5" y="606.9" width="2" height="2.0" fill="#3a3a3a" stroke="#f0f0f0"/>
<path d="M594.5 604.2V609.4" stroke="#b4b4b4"/>
<rect x="593.5" y="605.5" width="2" height="2.0" fill="#3a3a3a" stroke="#f0f0f0"/>
<path d="M596.5 603.7V606.9" stroke="#b4b4b4"/>
<rect x="595.5" y="604.6" width="2" height="2.0" fill="#3a3a3a" stroke="#f0f0f0"/>
<path d="M599.5 604.2V606.7" stroke="#b4b4b4"/>
<rect x="599" y="604.1" width="2" height="3.0" fill="#2484f4"/>
<path d="M602.5 601.3V607.5" stroke="#b4b4b4"/>
<rect x="601.5" y="603.1" width="2" height="2.6" fill="#3a3a3a" stroke="#f0f0f0"/>
<path d="M607.5 603.0V608.3" stroke="#b4b4b4"/>
<rect x="607" y="603.8" width="2" height="3.0" fill="#2484f4"/>
<path d="M612.5 601.9V609.0" stroke="#b4b4b4"/>
<rect x="612" y="602.8" width="2" height="6.1" fill="#2484f4"/>
<path d="M615.5 608.2V611.3" stroke="#b4b4b4"/>
<rect x="615" y="607.9" width="2" height="3.2" fill="#2484f4"/>
<path d="M630.5 604.4V608.7" stroke="#b4b4b4"/>
<rect x="629.5" y="604.9" width="2" height="2.0" fill="#3a3a3a" stroke="#f0f0f0"/>
<path d="M633.5 604.7V609.6" stroke="#b4b4b4"/>
<rect x="633" y="604.5" width="2" height="4.7" fill="#2484f4"/>
<path d="M635.5 602.3V610.0" stroke="#b4b4b4"/>
<rect x="634.5" y="604.0" width="2" height="4.7" fill="#3a3a3a" stroke="#f0f0f0"/>
<path d="M638.5 600.5V605.1" stroke="#b4b4b4"/>
<rect x="637.5" y="602.2" width="2" height="2.0" fill="#3a3a3a" stroke="#f0f0f0"/>
<path d="M646.5 595.7V599.8" stroke="#b4b4b4"/>
<rect x="645.5" y="596.0" width="2" height="2.0" fill="#3a3a3a" stroke="#f0f0f0"/>
<path d="M648.5 592.4V597.5" stroke="#b4b4b4"/>
<rect x="647.5" y="592.8" width="2" height="4.2" fill="#3a3a3a" stroke="#f0f0f0"/>
<path d="M651.5 591.9V595.2" stroke="#b4b4b4"/>
<rect x="651" y="591.7" width="2" height="3.0" fill="#2484f4"/>
<path d="M654.5 592.0V596.2" stroke="#b4b4b4"/>
<rect x="653.5" y="592.2" width="2" height="2.0" fill="#3a3a3a" stroke="#f0f0f0"/>
<path d="M656.5 589.9V593.7" stroke="#b4b4b4"/>
<rect x="655.5" y="591.2" width="2" height="2.0" fill="#3a3a3a" stroke="#f0f0f0"/>
<path d="M659.5 590.1V593.1" stroke="#b4b4b4"/>
<rect x="658.5" y="590.7" width="2" height="2.0" fill="#3a3a3a" stroke="#f0f0f0"/>
<path d="M661.5 587.9V593.8" stroke="#b4b4b4"/>
<rect x="660.5" y="589.9" width="2" height="2.0" fill="#3a3a3a" stroke="#f0f0f0"/>
<path d="M664.5 586.7V590.6" stroke="#b4b4b4"/>
<rect x="663.5" y="588.5" width="2" height="2.0" fill="#3a3a3a" stroke="#f0f0f0"/>
<path d="M667.5 586.8V590.8" stroke="#b4b4b4"/>
<rect x="667" y="588.3" width="2" height="3.1" fill="#2484f4"/>
<path d="M669.5 589.7V592.0" stroke="#b4b4b4"/>
<rect x="669" y="589.5" width="2" height="3.0" fill="#2484f4"/>
<path d="M672.5 588.9V592.1" stroke="#b4b4b4"/>
<rect x="671.5" y="589.3" width="2" height="2.0" fill="#3a3a3a" stroke="#f0f0f0"/>
<path d="M674.5 585.9V589.7" stroke="#b4b4b4"/>
<rect x="673.5" y="587.1" width="2" height="2.3" fill="#3a3a3a" stroke="#f0f0f0"/>
<path d="M677.5 581.2V587.5" stroke="#b4b4b4"/>
<rect x="676.5" y="582.6" width="2" height="4.4" fill="#3a3a3a" stroke="#f0f0f0"/>
<path d="M682.5 579.3V582.3" stroke="#b4b4b4"/>
<rect x="682" y="579.4" width="2" height="3.0" fill="#2484f4"/>
<path d="M685.5 577.6V582.4" stroke="#b4b4b4"/>
<rect x="684.5" y="579.2" width="2" height="2.0" fill="#3a3a3a" stroke="#f0f0f0"/>
<path d="M690.5 574.3V577.9" stroke="#b4b4b4"/>
<rect x="690" y="575.3" width="2" height="3.0" fill="#2484f4"/>
<path d="M693.5 574.4V579.8" stroke="#b4b4b4"/>
<rect x="692.5" y="576.0" width="2" height="2.0" fill="#3a3a3a" stroke="#f0f0f0"/>
<path d="M698.5 571.8V576.1" stroke="#b4b4b4"/>
<rect x="697.5" y="573.5" width="2" height="2.0" fill="#3a3a3a" stroke="#f0f0f0"/>
<path d="M700.5 568.9V574.6" stroke="#b4b4b4"/>
<rect x="699.5" y="569.6" width="2" height="4.6" fill="#3a3a3a" stroke="#f0f0f0"/>
<path d="M703.5 568.2V571.2" stroke="#b4b4b4"/>
<rect x="702.5" y="568.2" width="2" height="2.0" fill="#3a3a3a" stroke="#f0f0f0"/>
<path d="M706.5 566.8V570.5" stroke="#b4b4b4"/>
<rect x="705.5" y="567.1" width="2" height="2.0" fill="#3a3a3a" stroke="#f0f0f0"/>
<path d="M708.5 565.7V569.8" stroke="#b4b4b4"/>
<rect x="707.5" y="566.3" width="2" height="2.0" fill="#3a3a3a" stroke="#f0f0f0"/>
<path d="M711.5 565.0V569.0" stroke="#b4b4b4"/>
<rect x="710.5" y="565.1" width="2" height="2.1" fill="#3a3a3a" stroke="#f0f0f0"/>
<path d="M713.5 564.1V570.1" stroke="#b4b4b4"/>
<rect x="713" y="564.6" width="2" height="4.9" fill="#2484f4"/>
<path d="M719.5 568.2V570.8" stroke="#b4b4b4"/>
<rect x="719" y="568.1" width="2" height="3.0" fill="#2484f4"/>
<path d="M721.5 564.0V570.0" stroke="#b4b4b4"/>
<rect x="720.5" y="564.1" width="2" height="5.7" fill="#3a3a3a" stroke="#f0f0f0"/>
<path d="M726.5 554.0V562.2" stroke="#b4b4b4"/>
<rect x="725.5" y="555.1" width="2" height="6.0" fill="#3a3a3a" stroke="#f0f0f0"/>
<path d="M732.5 554.7V557.0" stroke="#b4b4b4"/>
<rect x="732" y="554.2" width="2" height="3.0" fill="#2484f4"/>
<path d="M734.5 554.3V557.1" stroke="#b4b4b4"/>
<rect x="733.5" y="554.8" width="2" height="2.0" fill="#3a3a3a" stroke="#f0f0f0"/>
<path d="M739.5 556.8V561.0" stroke="#b4b4b4"/>
<rect x="739" y="556.6" width="2" height="3.8" fill="#2484f4"/>
<path d="M745.5 561.2V564.9" stroke="#b4b4b4"/>
<rect x="745" y="561.5" width="2" height="3.0" fill="#2484f4"/>
<path d="M747.5 561.6V566.3" stroke="#b4b4b4"/>
<rect x="746.5" y="562.4" width="2" height="2.0" fill="#3a3a3a" stroke="#f0f0f0"/>
<path d="M750.5 560.5V563.7" stroke="#b4b4b4"/>
<rect x="749.5" y="561.0" width="2" height="2.0" fill="#3a3a3a" stroke="#f0f0f0"/>
<path d="M752.5 555.3V562.9" stroke="#b4b4b4"/>
<rect x="751.5" y="556.9" width="2" height="4.2" fill="#3a3a3a" stroke="#f0f0f0"/>
<path d="M755.5 554.9V558.0" stroke="#b4b4b4"/>
<rect x="754.5" y="555.0" width="2" height="2.0" fill="#3a3a3a" stroke="#f0f0f0"/>
<path d="M758.5 553.6V557.0" stroke="#b4b4b4"/>
<rect x="757.5" y="554.1" width="2" height="2.0" fill="#3a3a3a" stroke="#f0f0f0"/>
<path d="M760.5 552.3V555.5" stroke="#b4b4b4"/>
<rect x="759.5" y="553.3" width="2" height="2.0" fill="#3a3a3a" stroke="#f0f0f0"/>
<path d="M763.5 552.5V554.8" stroke="#b4b4b4"/>
<rect x="762.5" y="552.5" width="2" height="2.0" fill="#3a3a3a" stroke="#f0f0f0"/>
<path d="M765.5 551.6V557.3" stroke="#b4b4b4"/>
<rect x="765" y="553.0" width="2" height="3.6" fill="#2484f4"/>
<path d="M768.5 553.3V557.1" stroke="#b4b4b4"/>
<rect x="768" y="554.6" width="2" height="3.0" fill="#2484f4"/>
<path d="M771.5 553.8V557.7" stroke="#b4b4b4"/>
<rect x="771" y="554.6" width="2" height="3.0" fill="#2484f4"/>
<path d="M773.5 552.0V556.7" stroke="#b4b4b4"/>
<rect x="772.5" y="553.3" width="2" height="2.9" fill="#3a3a3a" stroke="#f0f0f0"/>
<path d="M776.5 543.2V554.4" stroke="#b4b4b4"/>
<rect x="775.5" y="547.0" width="2" height="6.2" fill="#8c8c8c" stroke="#f0f0f0"/>
<path d="M778.5 541.1V549.4" stroke="#b4b4b4"/>
<rect x="777.5" y="541.6" width="2" height="5.4" fill="#8c8c8c" stroke="#f0f0f0"/>
<path d="M780.5 540.5V546.4" stroke="#b4b4b4"/>
<rect x="780" y="541.1" width="2" height="3.9" fill="#2484f4"/>
<path d="M782.5 538.4V545.1" stroke="#b4b4b4"/>
<rect x="781.5" y="538.9" width="2" height="5.7" fill="#8c8c8c" stroke="#f0f0f0"/>
<path d="M783.5 534.4V539.8" stroke="#b4b4b4"/>
<rect x="782.5" y="535.5" width="2" height="3.4" fill="#8c8c8c" stroke="#f0f0f0"/>
<path d="M785.5 529.4V537.9" stroke="#b4b4b4"/>
<rect x="784.5" y="532.7" width="2" height="2.8" fill="#8c8c8c" stroke="#f0f0f0"/>
<path d="M787.5 531.9V538.3" stroke="#b4b4b4"/>
<rect x="787" y="532.2" width="2" height="3.8" fill="#2484f4"/>
<path d="M789.5 531.2V537.5" stroke="#b4b4b4"/>
<rect x="788.5" y="533.7" width="2" height="2.0" fill="#8c8c8c" stroke="#f0f0f0"/>
<path d="M791.5 531.0V535.9" stroke="#b4b4b4"/>
<rect x="790.5" y="531.9" width="2" height="2.0" fill="#8c8c8c" stroke="#f0f0f0"/>
<path d="M793.5 530.5V533.9" stroke="#b4b4b4"/>
<rect x="792.5" y="530.5" width="2" height="2.0" fill="#8c8c8c" stroke="#f0f0f0"/>
<path d="M795.5 528.9V535.1" stroke="#b4b4b4"/>
<rect x="795" y="530.6" width="2" height="3.0" fill="#2484f4"/>
<path d="M797.5 528.8V536.2" stroke="#b4b4b4"/>
<rect x="796.5" y="530.0" width="2" height="3.1" fill="#8c8c8c" stroke="#f0f0f0"/>
<path d="M799.5 525.9V533.2" stroke="#b4b4b4"/>
<rect x="799" y="528.9" width="2" height="3.0" fill="#2484f4"/>
<path d="M801.5 528.3V535.0" stroke="#b4b4b4"/>
<rect x="801" y="529.5" width="2" height="3.0" fill="#2484f4"/>
<path d="M802.5 526.0V534.8" stroke="#b4b4b4"/>
<rect x="801.5" y="529.8" width="2" height="2.0" fill="#8c8c8c" stroke="#f0f0f0"/>
<path d="M804.5 527.6V533.7" stroke="#b4b4b4"/>
<rect x="803.5" y="529.0" width="2" height="2.0" fill="#8c8c8c" stroke="#f0f0f0"/>
<path d="M806.5 526.4V534.0" stroke="#b4b4b4"/>
<rect x="806" y="529.2" width="2" height="3.3" fill="#2484f4"/>
<path d="M808.5 527.7V534.6" stroke="#b4b4b4"/>
<rect x="807.5" y="530.7" width="2" height="2.0" fill="#8c8c8c" stroke="#f0f0f0"/>
<path d="M810.5 526.2V532.4" stroke="#b4b4b4"/>
<rect x="809.5" y="529.9" width="2" height="2.0" fill="#8c8c8c" stroke="#f0f0f0"/>
<path d="M814.5 529.8V537.7" stroke="#b4b4b4"/>
<rect x="814" y="531.3" width="2" height="3.0" fill="#2484f4"/>
<path d="M816.5 529.2V537.8" stroke="#b4b4b4"/>
<rect x="816" y="531.8" width="2" height="3.0" fill="#2484f4"/>
<path d="M818.5 531.6V537.8" stroke="#b4b4b4"/>
<rect x="818" y="532.9" width="2" height="3.6" fill="#2484f4"/>
<path d="M820.5 534.4V541.4" stroke="#b4b4b4"/>
<rect x="820" y="535.5" width="2" height="4.2" fill="#2484f4"/>
<path d="M821.5 534.3V542.8" stroke="#b4b4b4"/>
<rect x="820.5" y="537.4" width="2" height="2.0" fill="#8c8c8c" stroke="#f0f0f0"/>
<path d="M823.5 536.7V540.7" stroke="#b4b4b4"/>
<rect x="823" y="537.0" width="2" height="3.0" fill="#2484f4"/>
<path d="M825.5 534.8V539.7" stroke="#b4b4b4"/>
<rect x="824.5" y="537.1" width="2" height="2.2" fill="#8c8c8c" stroke="#f0f0f0"/>
<path d="M827.5 533.7V545.9" stroke="#b4b4b4"/>
<rect x="827" y="536.6" width="2" height="6.4" fill="#2484f4"/>
<path d="M829.5 539.6V546.9" stroke="#b4b4b4"/>
<rect x="828.5" y="541.3" width="2" height="2.0" fill="#8c8c8c" stroke="#f0f0f0"/>
<path d="M833.5 530.2V541.1" stroke="#b4b4b4"/>
<rect x="833" y="533.4" width="2" height="5.1" fill="#2484f4"/>
<path d="M835.5 534.6V540.7" stroke="#b4b4b4"/>
<rect x="834.5" y="536.7" width="2" height="2.0" fill="#8c8c8c" stroke="#f0f0f0"/>
<path d="M837.5 533.3V539.7" stroke="#b4b4b4"/>
<rect x="836.5" y="534.7" width="2" height="2.6" fill="#8c8c8c" stroke="#f0f0f0"/>
<path d="M839.5 527.4V536.8" stroke="#b4b4b4"/>
<rect x="838.5" y="530.1" width="2" height="4.7" fill="#8c8c8c" stroke="#f0f0f0"/>
<path d="M840.5 528.5V535.0" stroke="#b4b4b4"/>
<rect x="840" y="529.6" width="2" height="3.7" fill="#2484f4"/>
<path d="M842.5 528.9V543.5" stroke="#b4b4b4"/>
<rect x="842" y="532.3" width="2" height="9.8" fill="#2484f4"/>
<path d="M844.5 537.6V548.2" stroke="#b4b4b4"/>
<rect x="844" y="541.1" width="2" height="6.3" fill="#2484f4"/>
<path d="M846.5 546.2V552.0" stroke="#b4b4b4"/>
<rect x="846" y="546.4" width="2" height="4.8" fill="#2484f4"/>
<path d="M848.5 548.6V555.5" stroke="#b4b4b4"/>
<rect x="848" y="550.2" width="2" height="5.3" fill="#2484f4"/>
<path d="M850.5 550.8V560.0" stroke="#b4b4b4"/>
<rect x="850" y="553.6" width="2" height="3.0" fill="#2484f4"/>
<path d="M852.5 552.0V556.3" stroke="#b4b4b4"/>
<rect x="851.5" y="552.6" width="2" height="2.5" fill="#8c8c8c" stroke="#f0f0f0"/>
<path d="M854.5 546.2V553.3" stroke="#b4b4b4"/>
<rect x="853.5" y="546.9" width="2" height="5.7" fill="#8c8c8c" stroke="#f0f0f0"/>
<path d="M856.5 543.9V551.3" stroke="#b4b4b4"/>
<rect x="855.5" y="545.4" width="2" height="2.0" fill="#8c8c8c" stroke="#f0f0f0"/>
<path d="M859.5 541.3V547.9" stroke="#b4b4b4"/>
<rect x="858.5" y="542.5" width="2" height="2.6" fill="#8c8c8c" stroke="#f0f0f0"/>
<path d="M861.5 536.2V544.9" stroke="#b4b4b4"/>
<rect x="860.5" y="539.6" width="2" height="3.0" fill="#8c8c8c" stroke="#f0f0f0"/>
<path d="M863.5 537.6V547.8" stroke="#b4b4b4"/>
<rect x="863" y="539.1" width="2" height="7.1" fill="#2484f4"/>
<path d="M865.5 540.9V549.6" stroke="#b4b4b4"/>
<rect x="864.5" y="543.0" width="2" height="2.6" fill="#8c8c8c" stroke="#f0f0f0"/>
<path d="M867.5 541.8V544.9" stroke="#b4b4b4"/>
<rect x="867" y="541.8" width="2" height="3.0" fill="#2484f4"/>
<path d="M869.5 542.2V545.3" stroke="#b4b4b4"/>
<rect x="869" y="542.1" width="2" height="3.0" fill="#2484f4"/>
<path d="M871.5 538.3V546.9" stroke="#b4b4b4"/>
<rect x="870.5" y="540.8" width="2" height="2.8" fill="#8c8c8c" stroke="#f0f0f0"/>
<path d="M875.5 535.2V549.4" stroke="#b4b4b4"/>
<rect x="875" y="537.6" width="2" height="10.9" fill="#2484f4"/>
<path d="M877.5 545.7V551.7" stroke="#b4b4b4"/>
<rect x="876.5" y="546.1" width="2" height="2.0" fill="#8c8c8c" stroke="#f0f0f0"/>
<path d="M878.5 544.4V550.6" stroke="#b4b4b4"/>
<rect x="878" y="545.7" width="2" height="3.8" fill="#2484f4"/>
<path d="M880.5 542.0V552.9" stroke="#b4b4b4"/>
<rect x="879.5" y="544.3" width="2" height="4.8" fill="#8c8c8c" stroke="#f0f0f0"/>
<path d="M882.5 543.3V546.6" stroke="#b4b4b4"/>
<rect x="882" y="543.8" width="2" height="3.1" fill="#2484f4"/>
<path d="M884.5 545.2V553.0" stroke="#b4b4b4"/>
<rect x="884" y="545.9" width="2" height="4.0" fill="#2484f4"/>
<path d="M886.5 545.1V553.3" stroke="#b4b4b4"/>
<rect x="885.5" y="547.5" width="2" height="2.0" fill="#8c8c8c" stroke="#f0f0f0"/>
<path d="M888.5 541.6V549.1" stroke="#b4b4b4"/>
<rect x="887.5" y="542.6" width="2" height="4.9" fill="#8c8c8c" stroke="#f0f0f0"/>
<path d="M890.5 540.1V546.8" stroke="#b4b4b4"/>
<rect x="889.5" y="541.3" width="2" height="2.0" fill="#8c8c8c" stroke="#f0f0f0"/>
<path d="M892.5 533.2V542.7" stroke="#b4b4b4"/>
<rect x="891.5" y="534.2" width="2" height="7.8" fill="#8c8c8c" stroke="#f0f0f0"/>
<path d="M894.5 525.2V535.4" stroke="#b4b4b4"/>
<rect x="893.5" y="529.1" width="2" height="5.1" fill="#8c8c8c" stroke="#f0f0f0"/>
<path d="M896.5 527.0V533.0" stroke="#b4b4b4"/>
<rect x="896" y="528.6" width="2" height="3.4" fill="#2484f4"/>
<path d="M897.5 529.7V535.5" stroke="#b4b4b4"/>
<rect x="896.5" y="530.2" width="2" height="2.0" fill="#8c8c8c" stroke="#f0f0f0"/>
<path d="M899.5 530.2V534.1" stroke="#b4b4b4"/>
<rect x="899" y="530.4" width="2" height="3.0" fill="#2484f4"/>
<path d="M903.5 534.4V544.1" stroke="#b4b4b4"/>
<rect x="903" y="534.5" width="2" height="7.3" fill="#2484f4"/>
<path d="M905.5 533.4V541.8" stroke="#b4b4b4"/>
<rect x="904.5" y="536.7" width="2" height="4.6" fill="#8c8c8c" stroke="#f0f0f0"/>
<path d="M907.5 533.5V540.2" stroke="#b4b4b4"/>
<rect x="907" y="536.2" width="2" height="3.8" fill="#2484f4"/>
<path d="M909.5 537.3V544.6" stroke="#b4b4b4"/>
<rect x="909" y="538.3" width="2" height="3.0" fill="#2484f4"/>
<path d="M911.5 535.8V540.9" stroke="#b4b4b4"/>
<rect x="910.5" y="537.8" width="2" height="2.2" fill="#8c8c8c" stroke="#f0f0f0"/>
<path d="M913.5 531.9V538.8" stroke="#b4b4b4"/>
<rect x="912.5" y="534.7" width="2" height="3.1" fill="#8c8c8c" stroke="#f0f0f0"/>
<path d="M915.5 533.2V540.0" stroke="#b4b4b4"/>
<rect x="915" y="534.2" width="2" height="5.3" fill="#2484f4"/>
<path d="M916.5 534.5V540.5" stroke="#b4b4b4"/>
<rect x="915.5" y="538.0" width="2" height="2.0" fill="#8c8c8c" stroke="#f0f0f0"/>
<path d="M918.5 537.5V543.7" stroke="#b4b4b4"/>
<rect x="918" y="538.1" width="2" height="3.0" fill="#2484f4"/>
<path d="M920.5 536.9V542.5" stroke="#b4b4b4"/>
<rect x="919.5" y="539.2" width="2" height="2.0" fill="#8c8c8c" stroke="#f0f0f0"/>
<path d="M922.5 539.0V545.1" stroke="#b4b4b4"/>
<rect x="922" y="539.2" width="2" height="3.0" fill="#2484f4"/>
<path d="M924.5 540.2V544.9" stroke="#b4b4b4"/>
<rect x="924" y="540.1" width="2" height="3.0" fill="#2484f4"/>
<path d="M926.5 540.8V544.2" stroke="#b4b4b4"/>
<rect x="926" y="541.4" width="2" height="3.0" fill="#2484f4"/>
<path d="M928.5 541.2V546.7" stroke="#b4b4b4"/>
<rect x="927.5" y="541.7" width="2" height="2.1" fill="#8c8c8c" stroke="#f0f0f0"/>
<path d="M930.5 535.9V544.8" stroke="#b4b4b4"/>
<rect x="929.5" y="539.6" width="2" height="2.1" fill="#8c8c8c" stroke="#f0f0f0"/>
<path d="M932.5 539.0V543.9" stroke="#b4b4b4"/>
<rect x="932" y="539.1" width="2" height="4.3" fill="#2484f4"/>
<path d="M934.5 532.6V544.2" stroke="#b4b4b4"/>
<rect x="933.5" y="535.2" width="2" height="7.6" fill="#8c8c8c" stroke="#f0f0f0"/>
<path d="M935.5 532.4V538.5" stroke="#b4b4b4"/>
<rect x="935" y="534.7" width="2" height="3.3" fill="#2484f4"/>
<path d="M937.5 534.2V539.4" stroke="#b4b4b4"/>
<rect x="937" y="536.2" width="2" height="3.0" fill="#2484f4"/>
<path d="M939.5 524.8V540.7" stroke="#b4b4b4"/>
<rect x="938.5" y="527.7" width="2" height="10.1" fill="#8c8c8c" stroke="#f0f0f0"/>
<path d="M943.5 524.8V529.6" stroke="#b4b4b4"/>
<rect x="943" y="525.5" width="2" height="3.1" fill="#2484f4"/>
<path d="M945.5 524.6V529.9" stroke="#b4b4b4"/>
<rect x="945" y="526.7" width="2" height="3.0" fill="#2484f4"/>
<path d="M947.5 525.4V533.2" stroke="#b4b4b4"/>
<rect x="947" y="527.8" width="2" height="4.9" fill="#2484f4"/>
<path d="M949.5 524.9V532.2" stroke="#b4b4b4"/>
<rect x="948.5" y="526.3" width="2" height="5.9" fill="#8c8c8c" stroke="#f0f0f0"/>
<path d="M951.5 525.2V529.0" stroke="#b4b4b4"/>
<rect x="951" y="525.8" width="2" height="3.6" fill="#2484f4"/>
<path d="M953.5 528.7V533.8" stroke="#b4b4b4"/>
<rect x="953" y="528.4" width="2" height="5.0" fill="#2484f4"/>
<path d="M954.5 529.8V536.5" stroke="#b4b4b4"/>
<rect x="953.5" y="530.7" width="2" height="2.1" fill="#8c8c8c" stroke="#f0f0f0"/>
<path d="M956.5 527.9V542.0" stroke="#b4b4b4"/>
<rect x="956" y="530.2" width="2" height="10.8" fill="#2484f4"/>
<path d="M958.5 539.3V545.3" stroke="#b4b4b4"/>
<rect x="958" y="540.0" width="2" height="5.4" fill="#2484f4"/>
<path d="M960.5 540.6V549.0" stroke="#b4b4b4"/>
<rect x="960" y="543.8" width="2" height="3.0" fill="#2484f4"/>
<path d="M962.5 540.7V547.5" stroke="#b4b4b4"/>
<rect x="961.5" y="543.2" width="2" height="2.5" fill="#8c8c8c" stroke="#f0f0f0"/>
<path d="M964.5 535.2V545.2" stroke="#b4b4b4"/>
<rect x="963.5" y="536.9" width="2" height="6.3" fill="#8c8c8c" stroke="#f0f0f0"/>
<path d="M966.5 533.9V542.0" stroke="#b4b4b4"/>
<rect x="966" y="536.4" width="2" height="5.9" fill="#2484f4"/>
<path d="M968.5 535.2V544.0" stroke="#b4b4b4"/>
<rect x="967.5" y="536.2" width="2" height="5.6" fill="#8c8c8c" stroke="#f0f0f0"/>
<path d="M970.5 532.2V537.4" stroke="#b4b4b4"/>
<rect x="969.5" y="534.4" width="2" height="2.0" fill="#8c8c8c" stroke="#f0f0f0"/>
<path d="M972.5 521.8V535.4" stroke="#b4b4b4"/>
<rect x="971.5" y="523.5" width="2" height="11.1" fill="#8c8c8c" stroke="#f0f0f0"/>
<path d="M973.5 518.8V526.3" stroke="#b4b4b4"/>
<rect x="972.5" y="521.6" width="2" height="2.0" fill="#8c8c8c" stroke="#f0f0f0"/>
<path d="M975.5 515.5V523.5" stroke="#b4b4b4"/>
<rect x="974.5" y="517.6" width="2" height="4.1" fill="#8c8c8c" stroke="#f0f0f0"/>
<path d="M977.5 516.4V524.8" stroke="#b4b4b4"/>
<rect x="977" y="517.1" width="2" height="4.7" fill="#2484f4"/>
<path d="M979.5 511.7V524.5" stroke="#b4b4b4"/>
<rect x="978.5" y="513.0" width="2" height="8.3" fill="#8c8c8c" stroke="#f0f0f0"/>
<path d="M981.5 512.1V517.5" stroke="#b4b4b4"/>
<rect x="981" y="512.3" width="2" height="3.0" fill="#2484f4"/>
<path d="M983.5 510.0V518.4" stroke="#b4b4b4"/>
<rect x="982.5" y="513.0" width="2" height="2.0" fill="#8c8c8c" stroke="#f0f0f0"/>
<path d="M985.5 506.6V514.3" stroke="#b4b4b4"/>
<rect x="984.5" y="508.1" width="2" height="5.4" fill="#8c8c8c" stroke="#f0f0f0"/>
<path d="M987.5 505.0V510.9" stroke="#b4b4b4"/>
<rect x="986.5" y="505.8" width="2" height="2.3" fill="#8c8c8c" stroke="#f0f0f0"/>
<path d="M989.5 504.1V509.3" stroke="#b4b4b4"/>
<rect x="989" y="504.9" width="2" height="3.0" fill="#2484f4"/>
<path d="M991.5 505.0V507.3" stroke="#b4b4b4"/>
<rect x="990.5" y="505.3" width="2" height="2.0" fill="#8c8c8c" stroke="#f0f0f0"/>
<path d="M992.5 505.3V516.2" stroke="#b4b4b4"/>
<rect x="992" y="505.1" width="2" height="8.7" fill="#2484f4"/>
<path d="M994.5 512.9V517.8" stroke="#b4b4b4"/>
<rect x="994" y="512.8" width="2" height="3.6" fill="#2484f4"/>
<path d="M996.5 508.6V515.9" stroke="#b4b4b4"/>
<rect x="995.5" y="510.8" width="2" height="5.1" fill="#8c8c8c" stroke="#f0f0f0"/>
<path d="M998.5 507.9V516.1" stroke="#b4b4b4"/>
<rect x="998" y="509.9" width="2" height="3.0" fill="#2484f4"/>
<path d="M1000.5 506.2V512.6" stroke="#b4b4b4"/>
<rect x="999.5" y="507.2" width="2" height="4.8" fill="#8c8c8c" stroke="#f0f0f0"/>
<path d="M1002.5 496.2V508.4" stroke="#b4b4b4"/>
<rect x="1001.5" y="499.6" width="2" height="7.7" fill="#8c8c8c" stroke="#f0f0f0"/>
<path d="M1004.5 494.5V503.6" stroke="#b4b4b4"/>
<rect x="1003.5" y="497.9" width="2" height="2.0" fill="#8c8c8c" stroke="#f0f0f0"/>
<path d="M1006.5 492.5V501.1" stroke="#b4b4b4"/>
<rect x="1005.5" y="495.8" width="2" height="2.4" fill="#8c8c8c" stroke="#f0f0f0"/>
<path d="M1008.5 491.4V497.9" stroke="#b4b4b4"/>
<rect x="1007.5" y="494.7" width="2" height="2.0" fill="#8c8c8c" stroke="#f0f0f0"/>
<path d="M1010.5 492.5V499.3" stroke="#b4b4b4"/>
<rect x="1009.5" y="493.9" width="2" height="2.0" fill="#8c8c8c" stroke="#f0f0f0"/>
<path d="M1013.5 487.6V495.7" stroke="#b4b4b4"/>
<rect x="1013" y="490.4" width="2" height="3.0" fill="#2484f4"/>
<path d="M1015.5 489.7V495.6" stroke="#b4b4b4"/>
<rect x="1015" y="491.1" width="2" height="3.0" fill="#2484f4"/>
<path d="M1017.5 482.8V493.4" stroke="#b4b4b4"/>
<rect x="1016.5" y="485.2" width="2" height="7.9" fill="#8c8c8c" stroke="#f0f0f0"/>
<path d="M1019.5 483.4V491.4" stroke="#b4b4b4"/>
<rect x="1019" y="484.7" width="2" height="3.3" fill="#2484f4"/>
<path d="M1023.5 480.6V490.1" stroke="#b4b4b4"/>
<rect x="1023" y="483.0" width="2" height="7.6" fill="#2484f4"/>
<path d="M1025.5 487.0V498.8" stroke="#b4b4b4"/>
<rect x="1025" y="489.6" width="2" height="8.0" fill="#2484f4"/>
<path d="M1027.5 493.3V499.0" stroke="#b4b4b4"/>
<rect x="1026.5" y="495.3" width="2" height="2.0" fill="#8c8c8c" stroke="#f0f0f0"/>
<path d="M1029.5 492.8V501.9" stroke="#b4b4b4"/>
<rect x="1029" y="495.0" width="2" height="4.1" fill="#2484f4"/>
<path d="M1030.5 497.4V507.2" stroke="#b4b4b4"/>
<rect x="1030" y="498.1" width="2" height="7.9" fill="#2484f4"/>
<path d="M1032.5 502.9V506.0" stroke="#b4b4b4"/>
<rect x="1031.5" y="503.7" width="2" height="2.0" fill="#8c8c8c" stroke="#f0f0f0"/>
<path d="M1034.5 498.6V508.1" stroke="#b4b4b4"/>
<rect x="1033.5" y="502.5" width="2" height="2.0" fill="#8c8c8c" stroke="#f0f0f0"/>
<path d="M1036.5 498.5V506.8" stroke="#b4b4b4"/>
<rect x="1036" y="501.8" width="2" height="3.0" fill="#2484f4"/>
<path d="M1038.5 492.8V506.0" stroke="#b4b4b4"/>
<rect x="1037.5" y="495.5" width="2" height="8.0" fill="#8c8c8c" stroke="#f0f0f0"/>
<path d="M1040.5 488.9V497.4" stroke="#b4b4b4"/>
<rect x="1039.5" y="492.7" width="2" height="2.8" fill="#8c8c8c" stroke="#f0f0f0"/>
<path d="M1042.5 491.4V500.4" stroke="#b4b4b4"/>
<rect x="1042" y="492.2" width="2" height="5.2" fill="#2484f4"/>
<path d="M1044.5 490.6V498.7" stroke="#b4b4b4"/>
<rect x="1043.5" y="493.3" width="2" height="3.6" fill="#8c8c8c" stroke="#f0f0f0"/>
<path d="M1046.5 491.5V497.3" stroke="#b4b4b4"/>
<rect x="1046" y="492.5" width="2" height="3.0" fill="#2484f4"/>
<path d="M1048.5 492.4V498.9" stroke="#b4b4b4"/>
<rect x="1048" y="494.2" width="2" height="3.6" fill="#2484f4"/>
<path d="M1049.5 491.4V499.5" stroke="#b4b4b4"/>
<rect x="1048.5" y="494.9" width="2" height="2.4" fill="#8c8c8c" stroke="#f0f0f0"/>
<path d="M1051.5 491.5V495.3" stroke="#b4b4b4"/>
<rect x="1050.5" y="492.6" width="2" height="2.4" fill="#8c8c8c" stroke="#f0f0f0"/>
<path d="M1053.5 489.6V495.7" stroke="#b4b4b4"/>
<rect x="1052.5" y="491.5" width="2" height="2.0" fill="#8c8c8c" stroke="#f0f0f0"/>
<path d="M1055.5 486.4V494.5" stroke="#b4b4b4"/>
<rect x="1054.5" y="486.9" width="2" height="5.6" fill="#8c8c8c" stroke="#f0f0f0"/>
<path d="M1057.5 485.2V491.2" stroke="#b4b4b4"/>
<rect x="1057" y="486.4" width="2" height="5.0" fill="#2484f4"/>
<path d="M1059.5 487.7V494.7" stroke="#b4b4b4"/>
<rect x="1058.5" y="489.9" width="2" height="2.0" fill="#8c8c8c" stroke="#f0f0f0"/>
<path d="M1061.5 486.9V497.4" stroke="#b4b4b4"/>
<rect x="1061" y="490.4" width="2" height="4.7" fill="#2484f4"/>
<path d="M1063.5 488.9V495.2" stroke="#b4b4b4"/>
<rect x="1062.5" y="490.4" width="2" height="4.1" fill="#8c8c8c" stroke="#f0f0f0"/>
<path d="M1065.5 487.3V499.0" stroke="#b4b4b4"/>
<rect x="1065" y="489.9" width="2" height="9.0" fill="#2484f4"/>
<path d="M1067.5 494.8V499.9" stroke="#b4b4b4"/>
<rect x="1066.5" y="495.7" width="2" height="2.7" fill="#8c8c8c" stroke="#f0f0f0"/>
<path d="M1068.5 486.9V496.9" stroke="#b4b4b4"/>
<rect x="1067.5" y="487.7" width="2" height="8.0" fill="#8c8c8c" stroke="#f0f0f0"/>
<path d="M1070.5 484.2V493.7" stroke="#b4b4b4"/>
<rect x="1070" y="487.2" width="2" height="4.5" fill="#2484f4"/>
<path d="M1072.5 485.9V495.1" stroke="#b4b4b4"/>
<rect x="1071.5" y="489.6" width="2" height="2.0" fill="#8c8c8c" stroke="#f0f0f0"/>
<path d="M1074.5 480.2V493.0" stroke="#b4b4b4"/>
<rect x="1073.5" y="481.6" width="2" height="8.3" fill="#8c8c8c" stroke="#f0f0f0"/>
<path d="M1076.5 481.1V486.7" stroke="#b4b4b4"/>
<rect x="1076" y="481.1" width="2" height="4.6" fill="#2484f4"/>
<path d="M1078.5 482.3V487.4" stroke="#b4b4b4"/>
<rect x="1078" y="484.7" width="2" height="3.0" fill="#2484f4"/>
<path d="M1080.5 484.2V491.7" stroke="#b4b4b4"/>
<rect x="1080" y="485.9" width="2" height="3.0" fill="#2484f4"/>
<path d="M1082.5 479.8V488.7" stroke="#b4b4b4"/>
<rect x="1081.5" y="482.5" width="2" height="5.1" fill="#8c8c8c" stroke="#f0f0f0"/>
<path d="M1084.5 477.8V485.4" stroke="#b4b4b4"/>
<rect x="1083.5" y="481.1" width="2" height="2.0" fill="#8c8c8c" stroke="#f0f0f0"/>
<path d="M1087.5 468.7V480.0" stroke="#b4b4b4"/>
<rect x="1086.5" y="469.5" width="2" height="8.3" fill="#8c8c8c" stroke="#f0f0f0"/>
<path d="M1089.5 466.6V470.7" stroke="#b4b4b4"/>
<rect x="1088.5" y="468.2" width="2" height="2.0" fill="#8c8c8c" stroke="#f0f0f0"/>
<path d="M1091.5 466.1V477.5" stroke="#b4b4b4"/>
<rect x="1091" y="468.3" width="2" height="6.4" fill="#2484f4"/>
<path d="M1095.5 466.3V479.0" stroke="#b4b4b4"/>
<rect x="1094.5" y="468.3" width="2" height="7.1" fill="#8c8c8c" stroke="#f0f0f0"/>
<path d="M1099.5 461.5V471.3" stroke="#b4b4b4"/>
<rect x="1098.5" y="464.3" width="2" height="5.5" fill="#8c8c8c" stroke="#f0f0f0"/>
<path d="M1101.5 460.9V470.1" stroke="#b4b4b4"/>
<rect x="1101" y="463.8" width="2" height="5.2" fill="#2484f4"/>
<path d="M1103.5 468.2V474.9" stroke="#b4b4b4"/>
<rect x="1103" y="468.0" width="2" height="6.1" fill="#2484f4"/>
<path d="M1105.5 467.9V473.8" stroke="#b4b4b4"/>
<rect x="1104.5" y="470.2" width="2" height="3.4" fill="#8c8c8c" stroke="#f0f0f0"/>
<path d="M1106.5 468.1V474.3" stroke="#b4b4b4"/>
<rect x="1106" y="469.5" width="2" height="3.0" fill="#2484f4"/>
<path d="M1108.5 471.7V478.2" stroke="#b4b4b4"/>
<rect x="1108" y="471.3" width="2" height="5.1" fill="#2484f4"/>
<path d="M1112.5 480.0V486.4" stroke="#b4b4b4"/>
<rect x="1112" y="479.7" width="2" height="6.6" fill="#2484f4"/>
<path d="M1114.5 484.7V492.0" stroke="#b4b4b4"/>
<rect x="1114" y="485.3" width="2" height="5.2" fill="#2484f4"/>
<path d="M1116.5 484.5V493.9" stroke="#b4b4b4"/>
<rect x="1115.5" y="486.6" width="2" height="3.4" fill="#8c8c8c" stroke="#f0f0f0"/>
<path d="M1120.5 483.4V492.4" stroke="#b4b4b4"/>
<rect x="1119.5" y="486.9" width="2" height="2.4" fill="#8c8c8c" stroke="#f0f0f0"/>
<path d="M1122.5 485.5V490.2" stroke="#b4b4b4"/>
<rect x="1122" y="486.4" width="2" height="3.2" fill="#2484f4"/>
<path d="M1124.5 485.3V494.7" stroke="#b4b4b4"/>
<rect x="1124" y="488.6" width="2" height="3.9" fill="#2484f4"/>
<path d="M1125.5 480.9V494.0" stroke="#b4b4b4"/>
<rect x="1124.5" y="483.9" width="2" height="8.1" fill="#8c8c8c" stroke="#f0f0f0"/>
<path d="M1127.5 478.2V485.5" stroke="#b4b4b4"/>
<rect x="1126.5" y="480.4" width="2" height="3.5" fill="#8c8c8c" stroke="#f0f0f0"/>
<path d="M1129.5 474.8V484.3" stroke="#b4b4b4"/>
<rect x="1128.5" y="476.1" width="2" height="4.2" fill="#8c8c8c" stroke="#f0f0f0"/>
<path d="M1131.5 475.1V484.6" stroke="#b4b4b4"/>
<rect x="1131" y="475.6" width="2" height="8.5" fill="#2484f4"/>
<path d="M1133.5 483.6V490.3" stroke="#b4b4b4"/>
<rect x="1133" y="483.2" width="2" height="4.1" fill="#2484f4"/>
<path d="M1135.5 484.5V490.7" stroke="#b4b4b4"/>
<rect x="1135" y="486.3" width="2" height="3.7" fill="#2484f4"/>
<path d="M1137.5 487.1V491.6" stroke="#b4b4b4"/>
<rect x="1136.5" y="488.3" width="2" height="2.0" fill="#8c8c8c" stroke="#f0f0f0"/>
<path d="M1139.5 485.4V497.2" stroke="#b4b4b4"/>
<rect x="1139" y="488.7" width="2" height="7.6" fill="#2484f4"/>
<path d="M1141.5 495.5V500.7" stroke="#b4b4b4"/>
<rect x="1141" y="495.3" width="2" height="5.2" fill="#2484f4"/>
<path d="M1143.5 497.5V504.1" stroke="#b4b4b4"/>
<rect x="1142.5" y="499.0" width="2" height="2.0" fill="#8c8c8c" stroke="#f0f0f0"/>
<path d="M1144.5 499.1V503.3" stroke="#b4b4b4"/>
<rect x="1144" y="498.9" width="2" height="3.0" fill="#2484f4"/>
<path d="M1146.5 499.8V505.7" stroke="#b4b4b4"/>
<rect x="1146" y="500.3" width="2" height="5.8" fill="#2484f4"/>
<path d="M1148.5 493.1V506.5" stroke="#b4b4b4"/>
<rect x="1147.5" y="495.9" width="2" height="9.7" fill="#8c8c8c" stroke="#f0f0f0"/>
<path d="M1150.5 490.5V501.3" stroke="#b4b4b4"/>
<rect x="1149.5" y="494.1" width="2" height="2.0" fill="#8c8c8c" stroke="#f0f0f0"/>
<path d="M1152.5 490.0V503.0" stroke="#b4b4b4"/>
<rect x="1152" y="493.9" width="2" height="3.9" fill="#2484f4"/>
<path d="M1154.5 491.8V503.9" stroke="#b4b4b4"/>
<rect x="1154" y="496.1" width="2" height="3.0" fill="#2484f4"/>
<path d="M1156.5 489.4V501.3" stroke="#b4b4b4"/>
<rect x="1155.5" y="490.5" width="2" height="7.6" fill="#8c8c8c" stroke="#f0f0f0"/>
<path d="M1158.5 473.5V491.8" stroke="#b4b4b4"/>
<rect x="1157.5" y="479.0" width="2" height="11.5" fill="#8c8c8c" stroke="#f0f0f0"/>
<path d="M1160.5 462.5V481.5" stroke="#b4b4b4"/>
<rect x="1159.5" y="466.4" width="2" height="12.6" fill="#8c8c8c" stroke="#f0f0f0"/>
<path d="M1162.5 461.9V468.9" stroke="#b4b4b4"/>
<rect x="1161.5" y="462.3" width="2" height="4.1" fill="#8c8c8c" stroke="#f0f0f0"/>
<path d="M1163.5 450.0V465.2" stroke="#b4b4b4"/>
<rect x="1162.5" y="452.0" width="2" height="10.2" fill="#8c8c8c" stroke="#f0f0f0"/>
<path d="M1165.5 448.3V453.1" stroke="#b4b4b4"/>
<rect x="1165" y="450.6" width="2" height="3.0" fill="#2484f4"/>
<path d="M1167.5 444.5V452.8" stroke="#b4b4b4"/>
<rect x="1166.5" y="450.5" width="2" height="2.0" fill="#8c8c8c" stroke="#f0f0f0"/>
<path d="M1169.5 445.2V451.4" stroke="#b4b4b4"/>
<rect x="1168.5" y="447.2" width="2" height="3.6" fill="#8c8c8c" stroke="#f0f0f0"/>
<path d="M1171.5 438.0V447.8" stroke="#b4b4b4"/>
<rect x="1170.5" y="442.6" width="2" height="4.6" fill="#8c8c8c" stroke="#f0f0f0"/>
<path d="M1173.5 438.1V446.8" stroke="#b4b4b4"/>
<rect x="1172.5" y="441.3" width="2" height="2.0" fill="#8c8c8c" stroke="#f0f0f0"/>
<path d="M1175.5 431.3V444.0" stroke="#b4b4b4"/>
<rect x="1174.5" y="434.9" width="2" height="7.0" fill="#8c8c8c" stroke="#f0f0f0"/>
<path d="M1177.5 430.3V441.2" stroke="#b4b4b4"/>
<rect x="1177" y="434.1" width="2" height="3.0" fill="#2484f4"/>
<path d="M1179.5 431.1V443.6" stroke="#b4b4b4"/>
<rect x="1179" y="435.2" width="2" height="3.0" fill="#2484f4"/>
<path d="M1181.5 432.4V443.2" stroke="#b4b4b4"/>
<rect x="1180.5" y="435.6" width="2" height="2.0" fill="#8c8c8c" stroke="#f0f0f0"/>
<path d="M1182.5 431.3V440.1" stroke="#b4b4b4"/>
<rect x="1181.5" y="434.2" width="2" height="2.0" fill="#8c8c8c" stroke="#f0f0f0"/>
<path d="M1184.5 428.5V440.3" stroke="#b4b4b4"/>
<rect x="1184" y="433.9" width="2" height="5.5" fill="#2484f4"/>
<path d="M1186.5 437.8V440.8" stroke="#b4b4b4"/>
<rect x="1186" y="437.5" width="2" height="3.0" fill="#2484f4"/>
<path d="M1188.5 433.7V440.2" stroke="#b4b4b4"/>
<rect x="1187.5" y="437.1" width="2" height="2.0" fill="#8c8c8c" stroke="#f0f0f0"/>
<path d="M1190.5 436.2V447.1" stroke="#b4b4b4"/>
<rect x="1190" y="436.6" width="2" height="10.0" fill="#2484f4"/>
<path d="M1192.5 443.6V446.8" stroke="#b4b4b4"/>
<rect x="1191.5" y="444.6" width="2" height="2.0" fill="#8c8c8c" stroke="#f0f0f0"/>
<path d="M1194.5 438.6V449.5" stroke="#b4b4b4"/>
<rect x="1194" y="444.0" width="2" height="3.0" fill="#2484f4"/>
<path d="M1196.5 441.0V450.6" stroke="#b4b4b4"/>
<rect x="1196" y="445.3" width="2" height="3.0" fill="#2484f4"/>
<path d="M1198.5 445.2V452.3" stroke="#b4b4b4"/>
<rect x="1197.5" y="445.9" width="2" height="2.0" fill="#8c8c8c" stroke="#f0f0f0"/>
<path d="M1200.5 436.0V451.2" stroke="#b4b4b4"/>
<rect x="1199.5" y="438.5" width="2" height="7.5" fill="#8c8c8c" stroke="#f0f0f0"/>
<path d="M1201.5 429.9V444.0" stroke="#b4b4b4"/>
<rect x="1200.5" y="432.3" width="2" height="6.1" fill="#8c8c8c" stroke="#f0f0f0"/>
<path d="M1203.5 429.3V434.1" stroke="#b4b4b4"/>
<rect x="1202.5" y="430.6" width="2" height="2.0" fill="#8c8c8c" stroke="#f0f0f0"/>
<path d="M1205.5 423.9V432.1" stroke="#b4b4b4"/>
<rect x="1204.5" y="425.3" width="2" height="5.6" fill="#8c8c8c" stroke="#f0f0f0"/>
<path d="M1207.5 423.5V438.0" stroke="#b4b4b4"/>
<rect x="1207" y="424.8" width="2" height="7.7" fill="#2484f4"/>
<path d="M1209.5 430.6V438.7" stroke="#b4b4b4"/>
<rect x="1209" y="431.0" width="2" height="3.0" fill="#2484f4"/>
<path d="M1211.5 428.5V447.3" stroke="#b4b4b4"/>
<rect x="1211" y="432.5" width="2" height="10.3" fill="#2484f4"/>
<path d="M1213.5 439.4V454.6" stroke="#b4b4b4"/>
<rect x="1213" y="441.8" width="2" height="7.9" fill="#2484f4"/>
<path d="M1215.5 445.7V458.5" stroke="#b4b4b4"/>
<rect x="1215" y="448.8" width="2" height="7.5" fill="#2484f4"/>
<path d="M1217.5 452.4V461.1" stroke="#b4b4b4"/>
<rect x="1216.5" y="453.6" width="2" height="2.1" fill="#8c8c8c" stroke="#f0f0f0"/>
<path d="M1219.5 437.6V454.7" stroke="#b4b4b4"/>
<rect x="1218.5" y="442.8" width="2" height="10.8" fill="#8c8c8c" stroke="#f0f0f0"/>
<path d="M1220.5 434.1V442.9" stroke="#b4b4b4"/>
<rect x="1219.5" y="435.8" width="2" height="6.9" fill="#8c8c8c" stroke="#f0f0f0"/>
<path d="M1222.5 423.0V441.3" stroke="#b4b4b4"/>
<rect x="1221.5" y="423.1" width="2" height="12.8" fill="#8c8c8c" stroke="#f0f0f0"/>
<path d="M1224.5 416.6V424.1" stroke="#b4b4b4"/>
<rect x="1223.5" y="417.2" width="2" height="5.9" fill="#8c8c8c" stroke="#f0f0f0"/>
<path d="M1226.5 414.4V424.0" stroke="#b4b4b4"/>
<rect x="1226" y="415.9" width="2" height="3.0" fill="#2484f4"/>
<path d="M1228.5 410.5V418.6" stroke="#b4b4b4"/>
<rect x="1227.5" y="416.4" width="2" height="2.0" fill="#8c8c8c" stroke="#f0f0f0"/>
<path d="M1230.5 409.0V417.2" stroke="#b4b4b4"/>
<rect x="1229.5" y="413.1" width="2" height="3.9" fill="#8c8c8c" stroke="#f0f0f0"/>
<path d="M1232.5 410.5V415.7" stroke="#b4b4b4"/>
<rect x="1232" y="412.6" width="2" height="3.0" fill="#2484f4"/>
<path d="M1234.5 409.6V420.3" stroke="#b4b4b4"/>
<rect x="1233.5" y="411.5" width="2" height="3.5" fill="#8c8c8c" stroke="#f0f0f0"/>
<path d="M1236.5 409.8V415.2" stroke="#b4b4b4"/>
<rect x="1236" y="410.2" width="2" height="3.0" fill="#2484f4"/>
<path d="M1238.5 410.0V417.3" stroke="#b4b4b4"/>
<rect x="1238" y="410.3" width="2" height="3.0" fill="#2484f4"/>
<path d="M1240.5 409.7V421.2" stroke="#b4b4b4"/>
<rect x="1240" y="411.4" width="2" height="7.4" fill="#2484f4"/>
<path d="M1242.5 417.0V431.3" stroke="#b4b4b4"/>
<rect x="1242" y="417.8" width="2" height="8.2" fill="#2484f4"/>
<path d="M1244.5 423.5V428.2" stroke="#b4b4b4"/>
<rect x="1244" y="424.6" width="2" height="3.0" fill="#2484f4"/>
<path d="M1246.5 418.8V429.8" stroke="#b4b4b4"/>
<rect x="1245.5" y="419.1" width="2" height="7.7" fill="#8c8c8c" stroke="#f0f0f0"/>
<path d="M1248.5 407.9V419.1" stroke="#b4b4b4"/>
<rect x="1247.5" y="410.1" width="2" height="9.0" fill="#8c8c8c" stroke="#f0f0f0"/>
<path d="M1250.5 401.5V413.4" stroke="#b4b4b4"/>
<rect x="1249.5" y="404.8" width="2" height="5.4" fill="#8c8c8c" stroke="#f0f0f0"/>
<path d="M1252.5 393.5V409.1" stroke="#b4b4b4"/>
<rect x="1251.5" y="398.7" width="2" height="6.0" fill="#8c8c8c" stroke="#f0f0f0"/>
<path d="M1254.5 377.4V404.6" stroke="#b4b4b4"/>
<rect x="1253.5" y="379.9" width="2" height="18.8" fill="#8c8c8c" stroke="#f0f0f0"/>
<path d="M1256.5 371.4V380.8" stroke="#b4b4b4"/>
<rect x="1255.5" y="373.9" width="2" height="6.0" fill="#8c8c8c" stroke="#f0f0f0"/>
<path d="M1259.5 370.2V383.2" stroke="#b4b4b4"/>
<rect x="1259" y="373.4" width="2" height="4.8" fill="#2484f4"/>
<path d="M1261.5 368.4V379.1" stroke="#b4b4b4"/>
<rect x="1260.5" y="370.7" width="2" height="6.9" fill="#8c8c8c" stroke="#f0f0f0"/>
<path d="M1263.5 363.1V375.4" stroke="#b4b4b4"/>
<rect x="1262.5" y="368.2" width="2" height="2.5" fill="#8c8c8c" stroke="#f0f0f0"/>
<path d="M1265.5 364.0V379.6" stroke="#b4b4b4"/>
<rect x="1265" y="367.7" width="2" height="10.5" fill="#2484f4"/>
<path d="M1267.5 375.8V387.3" stroke="#b4b4b4"/>
<rect x="1267" y="377.2" width="2" height="4.8" fill="#2484f4"/>
<path d="M1269.5 375.8V386.0" stroke="#b4b4b4"/>
<rect x="1269" y="380.5" width="2" height="3.0" fill="#2484f4"/>
<path d="M1271.5 381.1V397.4" stroke="#b4b4b4"/>
<rect x="1271" y="382.0" width="2" height="12.1" fill="#2484f4"/>
<path d="M1273.5 387.7V396.3" stroke="#b4b4b4"/>
<rect x="1272.5" y="392.0" width="2" height="2.0" fill="#8c8c8c" stroke="#f0f0f0"/>
<path d="M1275.5 377.3V394.2" stroke="#b4b4b4"/>
<rect x="1274.5" y="381.3" width="2" height="11.0" fill="#8c8c8c" stroke="#f0f0f0"/>
<path d="M1277.5 366.4V385.0" stroke="#b4b4b4"/>
<rect x="1276.5" y="367.7" width="2" height="13.6" fill="#8c8c8c" stroke="#f0f0f0"/>
<path d="M1280.5 351.0V372.0" stroke="#b4b4b4"/>
<rect x="1279.5" y="353.9" width="2" height="13.8" fill="#8c8c8c" stroke="#f0f0f0"/>
<path d="M1282.5 345.2V354.7" stroke="#b4b4b4"/>
<rect x="1281.5" y="346.6" width="2" height="7.3" fill="#8c8c8c" stroke="#f0f0f0"/>
<path d="M1284.5 337.1V349.7" stroke="#b4b4b4"/>
<rect x="1283.5" y="340.3" width="2" height="6.3" fill="#8c8c8c" stroke="#f0f0f0"/>
<path d="M1286.5 332.4V345.2" stroke="#b4b4b4"/>
<rect x="1285.5" y="333.4" width="2" height="6.9" fill="#8c8c8c" stroke="#f0f0f0"/>
<path d="M1288.5 324.1V338.8" stroke="#b4b4b4"/>
<rect x="1287.5" y="329.1" width="2" height="4.3" fill="#8c8c8c" stroke="#f0f0f0"/>
<path d="M1290.5 326.8V340.1" stroke="#b4b4b4"/>
<rect x="1290" y="328.6" width="2" height="7.0" fill="#2484f4"/>
<path d="M1292.5 328.7V336.6" stroke="#b4b4b4"/>
<rect x="1291.5" y="329.6" width="2" height="5.5" fill="#8c8c8c" stroke="#f0f0f0"/>
<path d="M1294.5 308.0V332.8" stroke="#b4b4b4"/>
<rect x="1293.5" y="312.8" width="2" height="16.8" fill="#8c8c8c" stroke="#f0f0f0"/>
<path d="M1296.5 308.6V318.9" stroke="#b4b4b4"/>
<rect x="1295.5" y="310.9" width="2" height="2.0" fill="#8c8c8c" stroke="#f0f0f0"/>
<path d="M1298.5 305.6V315.9" stroke="#b4b4b4"/>
<rect x="1297.5" y="308.4" width="2" height="2.6" fill="#8c8c8c" stroke="#f0f0f0"/>
<path d="M1301.5 298.1V311.7" stroke="#b4b4b4"/>
<rect x="1300.5" y="304.2" width="2" height="4.2" fill="#8c8c8c" stroke="#f0f0f0"/>
<path d="M1303.5 284.2V307.3" stroke="#b4b4b4"/>
<rect x="1302.5" y="287.6" width="2" height="16.7" fill="#8c8c8c" stroke="#f0f0f0"/>
<path d="M1305.5 271.0V292.7" stroke="#b4b4b4"/>
<rect x="1304.5" y="272.8" width="2" height="14.7" fill="#8c8c8c" stroke="#f0f0f0"/>
<path d="M1307.5 266.4V281.7" stroke="#b4b4b4"/>
<rect x="1307" y="272.3" width="2" height="7.4" fill="#2484f4"/>
<path d="M1309.5 260.8V280.1" stroke="#b4b4b4"/>
<rect x="1308.5" y="268.3" width="2" height="10.9" fill="#8c8c8c" stroke="#f0f0f0"/>
<path d="M1311.5 229.3V272.2" stroke="#b4b4b4"/>
<rect x="1310.5" y="231.1" width="2" height="37.3" fill="#8c8c8c" stroke="#f0f0f0"/>
<path d="M1313.5 227.7V240.9" stroke="#b4b4b4"/>
<rect x="1313" y="230.6" width="2" height="10.4" fill="#2484f4"/>
<path d="M1315.5 205.9V243.1" stroke="#b4b4b4"/>
<rect x="1314.5" y="212.3" width="2" height="28.1" fill="#8c8c8c" stroke="#f0f0f0"/>
<path d="M1317.5 192.2V215.5" stroke="#b4b4b4"/>
<rect x="1316.5" y="199.5" width="2" height="12.9" fill="#8c8c8c" stroke="#f0f0f0"/>
<path d="M1319.5 185.4V201.2" stroke="#b4b4b4"/>
<rect x="1318.5" y="193.7" width="2" height="5.8" fill="#8c8c8c" stroke="#f0f0f0"/>
<path d="M1322.5 190.3V206.3" stroke="#b4b4b4"/>
<rect x="1322" y="193.2" width="2" height="7.6" fill="#2484f4"/>
<path d="M1324.5 170.0V203.7" stroke="#b4b4b4"/>
<rect x="1323.5" y="176.8" width="2" height="23.4" fill="#8c8c8c" stroke="#f0f0f0"/>
<path d="M1326.5 157.0V183.6" stroke="#b4b4b4"/>
<rect x="1325.5" y="165.1" width="2" height="11.7" fill="#8c8c8c" stroke="#f0f0f0"/>
<path d="M1328.5 160.8V171.1" stroke="#b4b4b4"/>
<rect x="1328" y="164.5" width="2" height="3.0" fill="#2484f4"/>
<path d="M1330.5 162.5V227.4" stroke="#b4b4b4"/>
<rect x="1330" y="166.3" width="2" height="53.6" fill="#2484f4"/>
<path d="M1332.5 203.9V226.8" stroke="#b4b4b4"/>
<rect x="1331.5" y="208.5" width="2" height="10.9" fill="#8c8c8c" stroke="#f0f0f0"/>
<path d="M1334.5 195.7V208.9" stroke="#b4b4b4"/>
<rect x="1333.5" y="199.3" width="2" height="9.2" fill="#8c8c8c" stroke="#f0f0f0"/>
<path d="M1336.5 192.4V224.8" stroke="#b4b4b4"/>
<rect x="1336" y="198.8" width="2" height="19.5" fill="#2484f4"/>
<path d="M1338.5 210.1V225.2" stroke="#b4b4b4"/>
<rect x="1337.5" y="210.8" width="2" height="7.0" fill="#8c8c8c" stroke="#f0f0f0"/>
<path d="M1340.5 167.0V215.9" stroke="#b4b4b4"/>
<rect x="1339.5" y="173.8" width="2" height="37.0" fill="#8c8c8c" stroke="#f0f0f0"/>
<path d="M1343.5 161.5V178.2" stroke="#b4b4b4"/>
<rect x="1342.5" y="167.9" width="2" height="5.9" fill="#8c8c8c" stroke="#f0f0f0"/>
<path d="M1345.5 164.2V184.6" stroke="#b4b4b4"/>
<rect x="1345" y="167.4" width="2" height="12.4" fill="#2484f4"/>
<path d="M1347.5 171.5V204.3" stroke="#b4b4b4"/>
<rect x="1347" y="178.8" width="2" height="24.6" fill="#2484f4"/>
<path d="M1349.5 202.9V223.6" stroke="#b4b4b4"/>
<rect x="1349" y="202.5" width="2" height="12.7" fill="#2484f4"/>
<path d="M1351.5 211.9V228.3" stroke="#b4b4b4"/>
<rect x="1351" y="214.2" width="2" height="12.4" fill="#2484f4"/>
<path d="M1353.5 221.4V250.2" stroke="#b4b4b4"/>
<rect x="1353" y="225.5" width="2" height="21.3" fill="#2484f4"/>
<path d="M1355.5 238.6V267.4" stroke="#b4b4b4"/>
<rect x="1355" y="245.9" width="2" height="14.8" fill="#2484f4"/>
<path d="M1357.5 240.2V260.6" stroke="#b4b4b4"/>
<rect x="1356.5" y="242.1" width="2" height="18.1" fill="#8c8c8c" stroke="#f0f0f0"/>
<path d="M1359.5 226.9V246.5" stroke="#b4b4b4"/>
<rect x="1358.5" y="231.1" width="2" height="11.0" fill="#8c8c8c" stroke="#f0f0f0"/>
<path d="M1361.5 205.4V232.9" stroke="#b4b4b4"/>
<rect x="1360.5" y="212.6" width="2" height="18.5" fill="#8c8c8c" stroke="#f0f0f0"/>
<path d="M1364.5 212.1V225.4" stroke="#b4b4b4"/>
<rect x="1364" y="212.1" width="2" height="11.0" fill="#2484f4"/>
<path d="M1366.5 217.5V239.2" stroke="#b4b4b4"/>
<rect x="1366" y="222.1" width="2" height="14.7" fill="#2484f4"/>
<path d="M1368.5 233.6V282.6" stroke="#b4b4b4"/>
<rect x="1368" y="235.8" width="2" height="41.0" fill="#2484f4"/>
<path d="M1370.5 272.1V322.6" stroke="#b4b4b4"/>
<rect x="1370" y="275.7" width="2" height="39.0" fill="#2484f4"/>
<path d="M1372.5 313.7V322.3" stroke="#b4b4b4"/>
<rect x="1372" y="313.7" width="2" height="5.2" fill="#2484f4"/>
<path d="M1374.5 277.9V319.1" stroke="#b4b4b4"/>
<rect x="1373.5" y="285.6" width="2" height="32.8" fill="#8c8c8c" stroke="#f0f0f0"/>
<path d="M1376.5 276.6V291.9" stroke="#b4b4b4"/>
<rect x="1376" y="284.4" width="2" height="3.0" fill="#2484f4"/>
<path d="M1378.5 280.1V311.7" stroke="#b4b4b4"/>
<rect x="1378" y="285.6" width="2" height="20.5" fill="#2484f4"/>
<path d="M1380.5 272.9V306.9" stroke="#b4b4b4"/>
<rect x="1379.5" y="280.4" width="2" height="25.2" fill="#8c8c8c" stroke="#f0f0f0"/>
<path d="M1382.5 268.5V281.3" stroke="#b4b4b4"/>
<rect x="1381.5" y="269.4" width="2" height="11.0" fill="#8c8c8c" stroke="#f0f0f0"/>
<path d="M1385.5 256.0V275.3" stroke="#b4b4b4"/>
<rect x="1384.5" y="259.8" width="2" height="9.6" fill="#8c8c8c" stroke="#f0f0f0"/>
<path d="M1387.5 222.4V261.2" stroke="#b4b4b4"/>
<rect x="1386.5" y="228.6" width="2" height="31.2" fill="#8c8c8c" stroke="#f0f0f0"/>
<path d="M1389.5 221.3V236.1" stroke="#b4b4b4"/>
<rect x="1388.5" y="221.7" width="2" height="6.9" fill="#8c8c8c" stroke="#f0f0f0"/>
<path d="M1391.5 216.5V244.6" stroke="#b4b4b4"/>
<rect x="1391" y="221.2" width="2" height="21.0" fill="#2484f4"/>
<path d="M1393.5 233.5V263.5" stroke="#b4b4b4"/>
<rect x="1393" y="241.2" width="2" height="19.8" fill="#2484f4"/>
<path d="M1395.5 253.3V281.2" stroke="#b4b4b4"/>
<rect x="1395" y="260.0" width="2" height="12.9" fill="#2484f4"/>
<path d="M1397.5 269.0V284.9" stroke="#b4b4b4"/>
<rect x="1397" y="271.9" width="2" height="7.8" fill="#2484f4"/>
<path d="M1399.5 278.3V305.3" stroke="#b4b4b4"/>
<rect x="1399" y="278.7" width="2" height="22.9" fill="#2484f4"/>
<path d="M1401.5 295.0V333.7" stroke="#b4b4b4"/>
<rect x="1401" y="300.6" width="2" height="32.5" fill="#2484f4"/>
<path d="M1403.5 309.7V341.6" stroke="#b4b4b4"/>
<rect x="1402.5" y="318.0" width="2" height="14.6" fill="#8c8c8c" stroke="#f0f0f0"/>
<path d="M1406.5 293.2V321.2" stroke="#b4b4b4"/>
<rect x="1405.5" y="295.8" width="2" height="22.2" fill="#8c8c8c" stroke="#f0f0f0"/>
<path d="M1408.5 287.5V305.0" stroke="#b4b4b4"/>
<rect x="1408" y="295.3" width="2" height="9.3" fill="#2484f4"/>
<path d="M1410.5 277.8V309.0" stroke="#b4b4b4"/>
<rect x="1409.5" y="283.2" width="2" height="21.0" fill="#8c8c8c" stroke="#f0f0f0"/>
<path d="M1412.5 280.3V292.8" stroke="#b4b4b4"/>
<rect x="1412" y="282.2" width="2" height="3.0" fill="#2484f4"/>
<path d="M1414.5 276.0V306.0" stroke="#b4b4b4"/>
<rect x="1414" y="283.8" width="2" height="22.4" fill="#2484f4"/>
<path d="M1416.5 302.6V328.3" stroke="#b4b4b4"/>
<rect x="1416" y="305.2" width="2" height="15.1" fill="#2484f4"/>
<path d="M1418.5 316.8V347.7" stroke="#b4b4b4"/>
<rect x="1418" y="319.3" width="2" height="24.9" fill="#2484f4"/>
<path d="M1420.5 327.7V350.7" stroke="#b4b4b4"/>
<rect x="1419.5" y="329.3" width="2" height="14.3" fill="#8c8c8c" stroke="#f0f0f0"/>
<path d="M1422.5 324.3V334.1" stroke="#b4b4b4"/>
<rect x="1422" y="328.8" width="2" height="4.9" fill="#2484f4"/>
<path d="M1424.5 303.8V337.4" stroke="#b4b4b4"/>
<rect x="1423.5" y="309.1" width="2" height="24.1" fill="#8c8c8c" stroke="#f0f0f0"/>
<path d="M1427.5 291.4V314.9" stroke="#b4b4b4"/>
<rect x="1426.5" y="292.3" width="2" height="16.8" fill="#8c8c8c" stroke="#f0f0f0"/>
<path d="M1429.5 274.5V295.6" stroke="#b4b4b4"/>
<rect x="1428.5" y="277.7" width="2" height="14.6" fill="#8c8c8c" stroke="#f0f0f0"/>
<path d="M1431.5 235.8V286.1" stroke="#b4b4b4"/>
<rect x="1430.5" y="237.3" width="2" height="40.4" fill="#8c8c8c" stroke="#f0f0f0"/>
<path d="M1433.5 219.6V241.6" stroke="#b4b4b4"/>
<rect x="1432.5" y="227.5" width="2" height="9.9" fill="#8c8c8c" stroke="#f0f0f0"/>
<path d="M1435.5 219.5V243.3" stroke="#b4b4b4"/>
<rect x="1435" y="227.0" width="2" height="15.8" fill="#2484f4"/>
<path d="M1437.5 241.2V257.2" stroke="#b4b4b4"/>
<rect x="1437" y="241.7" width="2" height="11.7" fill="#2484f4"/>
<path d="M1439.5 229.2V256.3" stroke="#b4b4b4"/>
<rect x="1438.5" y="233.7" width="2" height="19.3" fill="#8c8c8c" stroke="#f0f0f0"/>
<path d="M1441.5 231.9V241.7" stroke="#b4b4b4"/>
<rect x="1441" y="233.2" width="2" height="7.9" fill="#2484f4"/>
<path d="M1443.5 228.8V248.6" stroke="#b4b4b4"/>
<rect x="1442.5" y="233.3" width="2" height="7.3" fill="#8c8c8c" stroke="#f0f0f0"/>
<path d="M1445.5 228.9V253.4" stroke="#b4b4b4"/>
<rect x="1445" y="232.8" width="2" height="14.0" fill="#2484f4"/>
<path d="M1448.5 244.0V254.8" stroke="#b4b4b4"/>
<rect x="1448" y="245.6" width="2" height="3.0" fill="#2484f4"/>
<path d="M1450.5 223.7V251.4" stroke="#b4b4b4"/>
<rect x="1449.5" y="223.9" width="2" height="23.9" fill="#8c8c8c" stroke="#f0f0f0"/>
<path d="M1452.5 188.7V224.7" stroke="#b4b4b4"/>
<rect x="1451.5" y="196.7" width="2" height="27.2" fill="#8c8c8c" stroke="#f0f0f0"/>
<path d="M1454.5 182.9V203.8" stroke="#b4b4b4"/>
<rect x="1453.5" y="188.2" width="2" height="8.5" fill="#8c8c8c" stroke="#f0f0f0"/>
<path d="M1456.5 186.0V202.6" stroke="#b4b4b4"/>
<rect x="1456" y="187.7" width="2" height="10.0" fill="#2484f4"/>
<path d="M1458.5 191.7V221.6" stroke="#b4b4b4"/>
<rect x="1458" y="196.7" width="2" height="19.1" fill="#2484f4"/>
<path d="M1460.5 206.5V219.9" stroke="#b4b4b4"/>
<rect x="1459.5" y="213.8" width="2" height="2.0" fill="#8c8c8c" stroke="#f0f0f0"/>
<path d="M1462.5 205.7V228.5" stroke="#b4b4b4"/>
<rect x="1462" y="213.7" width="2" height="11.6" fill="#2484f4"/>
<path d="M1464.5 222.6V237.8" stroke="#b4b4b4"/>
<rect x="1464" y="224.3" width="2" height="7.4" fill="#2484f4"/>
<path d="M1466.5 228.1V246.3" stroke="#b4b4b4"/>
<rect x="1466" y="230.7" width="2" height="14.8" fill="#2484f4"/>
<path d="M1328 156V178" stroke="#b4b4b4"/>
<path d="M1355.5 250V310" stroke="#b4b4b4"/>
<path d="M1371.5 290V346" stroke="#b4b4b4"/>
<path d="M1379 285V310" stroke="#b4b4b4"/>
<path d="M1380 270V300" stroke="#b4b4b4"/>
<path d="M1401 300V334" stroke="#b4b4b4"/>
<path d="M1420.5 330V368" stroke="#b4b4b4"/>
<path d="M1309 230V300" stroke="#b4b4b4"/>
<path d="M1336 200V240" stroke="#b4b4b4"/>
</g>
<rect x="625.5" y="121" width="1.5" height="544" fill="#c81414"/>
<path d="M626.5 534.1H783.7M626 616.5H793M710.3 542V616.5" stroke="#c8c8c8" stroke-width="1.4" fill="none"/>
<path d="M710.2 535L706.3 541.6H714.4Z" stroke="#e0e0e0" stroke-width="1.3" fill="#000"/>
<circle cx="624.3" cy="619.8" r="2.7" fill="#f4f4f4"/>
<circle cx="1328" cy="155" r="2.7" fill="#f4f4f4"/>
<circle cx="136" cy="556" r="2.4" fill="#3ecfe0"/>
<circle cx="623" cy="614" r="2.6" fill="#3ecfe0"/>
<rect x="69" y="144.2" width="9.6" height="9.8" fill="#ffffff"/>
<rect x="69" y="157" width="9.6" height="9.8" fill="#e5179a"/>
<rect x="69" y="169.7" width="9.6" height="9.8" fill="#2bbf3e"/>
<rect x="69" y="182.4" width="9.6" height="9.8" fill="#4ad8e6"/>
<path d="M61.5 146.5H66.5V151H61.5Z M62.5 148.7H65.5" stroke="#777" stroke-width="0.9" fill="none"/>
<path d="M64 151V175.5H67.5M64 166.5H67.5" stroke="#5a5a5a" stroke-width="0.9" fill="none"/>
<path d="M665.9 124.8V134M661.9 129.4H670.5" stroke="#707070" stroke-width="1"/>
<path d="M665.9 126.8L668.5 129.4L665.9 132L663.3 129.4Z" stroke="#707070" stroke-width="1" fill="none"/>
<path d="M714.5 133.2H722M715.5 132L720.5 126.5" stroke="#6e6e6e" stroke-width="1.1" fill="none"/>
<path d="M780 126H788M780 128.5H788M780 131H788M780 133.5H788" stroke="#6e6e6e" stroke-width="1.6"/>
<circle cx="832.5" cy="128.3" r="3" stroke="#7a7a7a" stroke-width="1.2" fill="none"/>
<path d="M834.7 130.5L838 133.8" stroke="#7a7a7a" stroke-width="1.5"/>
<path d="M1 560.5H47.5L51.5 567.5L47.5 574.4H1Z" fill="#48d0e0"/>
<path d="M1488.5 229.7L1492.5 224.3H1536V235.2H1492.5Z" fill="#1faa38"/>
<path d="M1488.5 242.7L1492.5 236.7H1536V248.8H1492.5Z" fill="#f4f4f4"/>
<path d="M1488.5 264.8L1492.5 258.3H1536V271.3H1492.5Z" fill="#e0189a"/>
<text transform="translate(12.50,18.00) scale(0.6972,1)" font-size="18" fill="#f2f2f2" stroke="#f2f2f2" stroke-width="0.35" >SOX</text>
<text transform="translate(75.60,18.00) scale(1.0178,1)" font-size="18" fill="#ef2b45" stroke="#ef2b45" stroke-width="0.35" >5534.098</text>
<text transform="translate(172.20,18.00) scale(1.0354,1)" font-size="18" fill="#ef2b45" stroke="#ef2b45" stroke-width="0.35" >-10.889</text>
<text transform="translate(42.50,39.00) scale(1.0291,1)" font-size="18" fill="#f99b2b" stroke="#f99b2b" stroke-width="0.35" >At</text>
<text transform="translate(71.96,39.00) scale(1.0447,1)" font-size="18" fill="#f2f2f2" stroke="#f2f2f2" stroke-width="0.35" >14:32</text>
<text transform="translate(130.00,39.00) scale(0.6429,1)" font-size="18" fill="#f99b2b" stroke="#f99b2b" stroke-width="0.35" >O</text>
<text transform="translate(152.00,39.00) scale(0.9858,1)" font-size="18" fill="#f2f2f2" stroke="#f2f2f2" stroke-width="0.35" >5564.170</text>
<text transform="translate(237.18,39.00) scale(0.8182,1)" font-size="18" fill="#f99b2b" stroke="#f99b2b" stroke-width="0.35" >H</text>
<text transform="translate(259.50,39.00) scale(0.9712,1)" font-size="18" fill="#f2f2f2" stroke="#f2f2f2" stroke-width="0.35" >5571.393</text>
<text transform="translate(346.00,39.00) scale(0.8000,1)" font-size="18" fill="#f99b2b" stroke="#f99b2b" stroke-width="0.35" >L</text>
<text transform="translate(366.80,39.00) scale(0.9818,1)" font-size="18" fill="#f2f2f2" stroke="#f2f2f2" stroke-width="0.35" >5520.282</text>
<text transform="translate(452.49,39.00) scale(1.0136,1)" font-size="18" fill="#f99b2b" stroke="#f99b2b" stroke-width="0.35" >Prev</text>
<text transform="translate(501.70,39.00) scale(0.9898,1)" font-size="18" fill="#f2f2f2" stroke="#f2f2f2" stroke-width="0.35" >5544.987</text>
<text transform="translate(5.00,60.00) scale(0.8995,1)" font-size="18" fill="#151515" >SOX Index</text>
<text transform="translate(257.50,59.30) scale(0.5981,1)" font-size="17" fill="#d6b4bb" stroke="#d6b4bb" stroke-width="0.35" >94)</text>
<text transform="translate(278.60,59.20) scale(0.9411,1)" font-size="17" fill="#f2f2f2" stroke="#f2f2f2" stroke-width="0.35" >Suggested Charts</text>
<text transform="translate(433.50,59.30) scale(0.6274,1)" font-size="17" fill="#d6b4bb" stroke="#d6b4bb" stroke-width="0.35" >96)</text>
<text transform="translate(454.70,59.10) scale(0.9394,1)" font-size="17" fill="#f2f2f2" stroke="#f2f2f2" stroke-width="0.35" >Actions</text>
<text transform="translate(534.00,59.30) scale(0.6567,1)" font-size="17" fill="#d6b4bb" stroke="#d6b4bb" stroke-width="0.35" >97)</text>
<text transform="translate(554.99,59.10) scale(0.9065,1)" font-size="17" fill="#f2f2f2" stroke="#f2f2f2" stroke-width="0.35" >Edit</text>
<text transform="translate(1319.00,58.70) scale(1.0319,1)" font-size="16" fill="#f2f2f2" stroke="#f2f2f2" stroke-width="0.35" >G 65: Cndl-2h98-99overDay</text>
<text transform="translate(6.00,82.50) scale(1.0289,1)" font-size="14.5" fill="#1a1a1a" >06/13/2024</text>
<text transform="translate(100.40,82.50) scale(0.8800,1)" font-size="14.5" fill="#f99b2b" >-</text>
<text transform="translate(111.60,82.60) scale(1.0303,1)" font-size="14.5" fill="#1a1a1a" >06/30/2000</text>
<text transform="translate(245.53,82.20) scale(0.8713,1)" font-size="14.5" fill="#1a1a1a" >Local CCY</text>
<text transform="translate(3.00,100.00) scale(0.9120,1)" font-size="14.5" fill="#f99b2b" >Study</text>
<text transform="translate(48.50,100.00) scale(0.9158,1)" font-size="14.5" fill="#1a1a1a" >Simple MA</text>
<text transform="translate(152.63,99.70) scale(0.9670,1)" font-size="14.5" fill="#f99b2b" >Period</text>
<text transform="translate(209.30,99.70) scale(0.8466,1)" font-size="14.5" fill="#1a1a1a" >50</text>
<text transform="translate(238.60,99.80) scale(0.9560,1)" font-size="14.5" fill="#f99b2b" >Offset</text>
<text transform="translate(307.00,99.80) scale(0.8250,1)" font-size="14.5" fill="#1a1a1a" >0</text>
<text transform="translate(9.10,116.30) scale(0.8741,1)" font-size="12" fill="#f2f2f2" >1D</text>
<text transform="translate(37.00,116.30) scale(0.8804,1)" font-size="12" fill="#f2f2f2" >5D</text>
<text transform="translate(66.40,116.30) scale(0.8576,1)" font-size="12" fill="#f2f2f2" >1M</text>
<text transform="translate(95.70,116.30) scale(0.8746,1)" font-size="12" fill="#f2f2f2" >1H1M</text>
<text transform="translate(138.70,116.30) scale(0.8859,1)" font-size="12" fill="#f2f2f2" >1Y</text>
<text transform="translate(166.70,116.30) scale(0.9134,1)" font-size="12" fill="#f2f2f2" >10Y</text>
<text transform="translate(201.00,116.30) scale(0.8807,1)" font-size="12" fill="#f2f2f2" >20Y</text>
<text transform="translate(235.40,116.30) scale(0.9660,1)" font-size="12" fill="#f2f2f2" >Max</text>
<text transform="translate(270.90,116.30) scale(1.0273,1)" font-size="12" fill="#f2f2f2" >Daily</text>
<text transform="translate(413.50,116.30) scale(1.0426,1)" font-size="12" fill="#f2f2f2" >Table</text>
<text transform="translate(1231.30,117.50) scale(0.9490,1)" font-size="14" fill="#8a6c2c" >Add Data</text>
<text transform="translate(1429.98,117.00) scale(0.9195,1)" font-size="13.5" fill="#f2f2f2" >Edit Chart</text>
<text transform="translate(175.90,140.90) scale(1.0481,1)" font-size="10.5" fill="#e6e6e6" >Last Price</text>
<text transform="translate(81.80,153.70) scale(1.0257,1)" font-size="10.5" fill="#e6e6e6" >SOX Index  (R1)</text>
<text transform="translate(81.80,166.60) scale(0.9946,1)" font-size="10.5" fill="#e6e6e6" >SMAVG (50)  on Close</text>
<text transform="translate(81.80,179.40) scale(0.9946,1)" font-size="10.5" fill="#e6e6e6" >SMAVG (20)  on Close</text>
<text transform="translate(81.80,191.60) scale(1.0415,1)" font-size="10.5" fill="#e6e6e6" >SOX Index 12/12/2050-12/29/2026</text>
<text transform="translate(264.00,191.60) scale(1.1554,1)" font-size="10.5" fill="#e6e6e6" >(L1)</text>
<text transform="translate(291.00,153.70) scale(0.9728,1)" font-size="10.5" fill="#e6e6e6" >1140.530</text>
<text transform="translate(291.00,166.60) scale(0.9555,1)" font-size="10.5" fill="#e6e6e6" >1082.750</text>
<text transform="translate(291.00,179.40) scale(0.9728,1)" font-size="10.5" fill="#e6e6e6" >1171.335</text>
<text transform="translate(291.00,191.60) scale(0.9555,1)" font-size="10.5" fill="#e6e6e6" >5533.946</text>
<text transform="translate(677.00,133.00) scale(0.9771,1)" font-size="10.5" fill="#dcdcdc" >Track</text>
<text transform="translate(729.00,133.00) scale(0.9480,1)" font-size="10.5" fill="#dcdcdc" >Annotate</text>
<text transform="translate(795.00,133.00) scale(0.9190,1)" font-size="10.5" fill="#dcdcdc" >News</text>
<text transform="translate(844.30,133.00) scale(0.9486,1)" font-size="10.5" fill="#dcdcdc" >Zoom</text>
<text transform="translate(16.90,133.90) scale(0.9200,1)" font-size="10.6" fill="#e2e2e2" >25000</text>
<text transform="translate(16.90,246.10) scale(0.9200,1)" font-size="10.6" fill="#e2e2e2" >20000</text>
<text transform="translate(16.90,358.60) scale(0.9200,1)" font-size="10.6" fill="#e2e2e2" >15000</text>
<text transform="translate(16.90,471.40) scale(0.9200,1)" font-size="10.6" fill="#e2e2e2" >10000</text>
<text transform="translate(22.32,582.70) scale(0.9200,1)" font-size="10.6" fill="#e2e2e2" >5000</text>
<text transform="translate(1495.00,144.70) scale(0.9200,1)" font-size="10.6" fill="#e2e2e2" >1400</text>
<text transform="translate(1495.00,223.30) scale(0.9200,1)" font-size="10.6" fill="#e2e2e2" >1200</text>
<text transform="translate(1495.00,301.90) scale(0.9200,1)" font-size="10.6" fill="#e2e2e2" >1000</text>
<text transform="translate(1495.00,380.50) scale(0.9200,1)" font-size="10.6" fill="#e2e2e2" >800</text>
<text transform="translate(1495.00,459.20) scale(0.9200,1)" font-size="10.6" fill="#e2e2e2" >600</text>
<text transform="translate(1495.00,537.90) scale(0.9200,1)" font-size="10.6" fill="#e2e2e2" >400</text>
<text transform="translate(1495.00,616.60) scale(0.9200,1)" font-size="10.6" fill="#e2e2e2" >200</text>
<text transform="translate(81.71,677.00) scale(0.9200,1)" font-size="10.6" fill="#e2e2e2" >Dec</text>
<text transform="translate(244.39,677.00) scale(0.9200,1)" font-size="10.6" fill="#e2e2e2" >Mar</text>
<text transform="translate(410.09,677.00) scale(0.9200,1)" font-size="10.6" fill="#e2e2e2" >Jun</text>
<text transform="translate(573.28,677.00) scale(0.9200,1)" font-size="10.6" fill="#e2e2e2" >Sep</text>
<text transform="translate(737.51,677.00) scale(0.9200,1)" font-size="10.6" fill="#e2e2e2" >Dec</text>
<text transform="translate(856.19,677.00) scale(0.9200,1)" font-size="10.6" fill="#e2e2e2" >Mar</text>
<text transform="translate(972.99,677.00) scale(0.9200,1)" font-size="10.6" fill="#e2e2e2" >Jun</text>
<text transform="translate(1090.68,677.00) scale(0.9200,1)" font-size="10.6" fill="#e2e2e2" >Sep</text>
<text transform="translate(1207.01,677.00) scale(0.9200,1)" font-size="10.6" fill="#e2e2e2" >Dec</text>
<text transform="translate(1321.99,677.00) scale(0.9200,1)" font-size="10.6" fill="#e2e2e2" >Mar</text>
<text transform="translate(1438.79,677.00) scale(0.9200,1)" font-size="10.6" fill="#e2e2e2" >Jun</text>
<text transform="translate(74.36,690.00) scale(0.9200,1)" font-size="10.6" fill="#e2e2e2" >1997</text>
<text transform="translate(435.11,690.00) scale(0.9200,1)" font-size="10.6" fill="#e2e2e2" >1998</text>
<text transform="translate(995.11,690.00) scale(0.9200,1)" font-size="10.6" fill="#e2e2e2" >1999</text>
<text transform="translate(1350.11,690.00) scale(0.9200,1)" font-size="10.6" fill="#e2e2e2" >2000</text>
<text transform="translate(105.70,554.00) scale(0.9685,1)" font-size="11" fill="#35bcd2" >Hi: 5931.833</text>
<text transform="translate(521.00,628.00) scale(0.9604,1)" font-size="11" fill="#35bcd2" >Low: 3388.623</text>
<text transform="translate(592.30,632.00) scale(0.9722,1)" font-size="11" fill="#dedede" >Low: 182.590</text>
<text transform="translate(627.70,532.30) scale(0.9189,1)" font-size="11" fill="#dedede" >+111.47% (&gt; 1000%ann.)</text>
<text transform="translate(1297.50,151.50) scale(0.9637,1)" font-size="11" fill="#dedede" >Hi: 1362.100</text>
<text transform="translate(3.75,571.90) scale(0.9014,1)" font-size="11" fill="#0e2a35" >5533.946</text>
<text transform="translate(1494.40,233.80) scale(0.9144,1)" font-size="11" fill="#ffffff" >1171.335</text>
<text transform="translate(1494.40,246.60) scale(0.9144,1)" font-size="11" fill="#1a1a1a" >1140.530</text>
<text transform="translate(1494.40,269.40) scale(0.8981,1)" font-size="11" fill="#ffffff" >1082.750</text>
</svg>
</body></html>
